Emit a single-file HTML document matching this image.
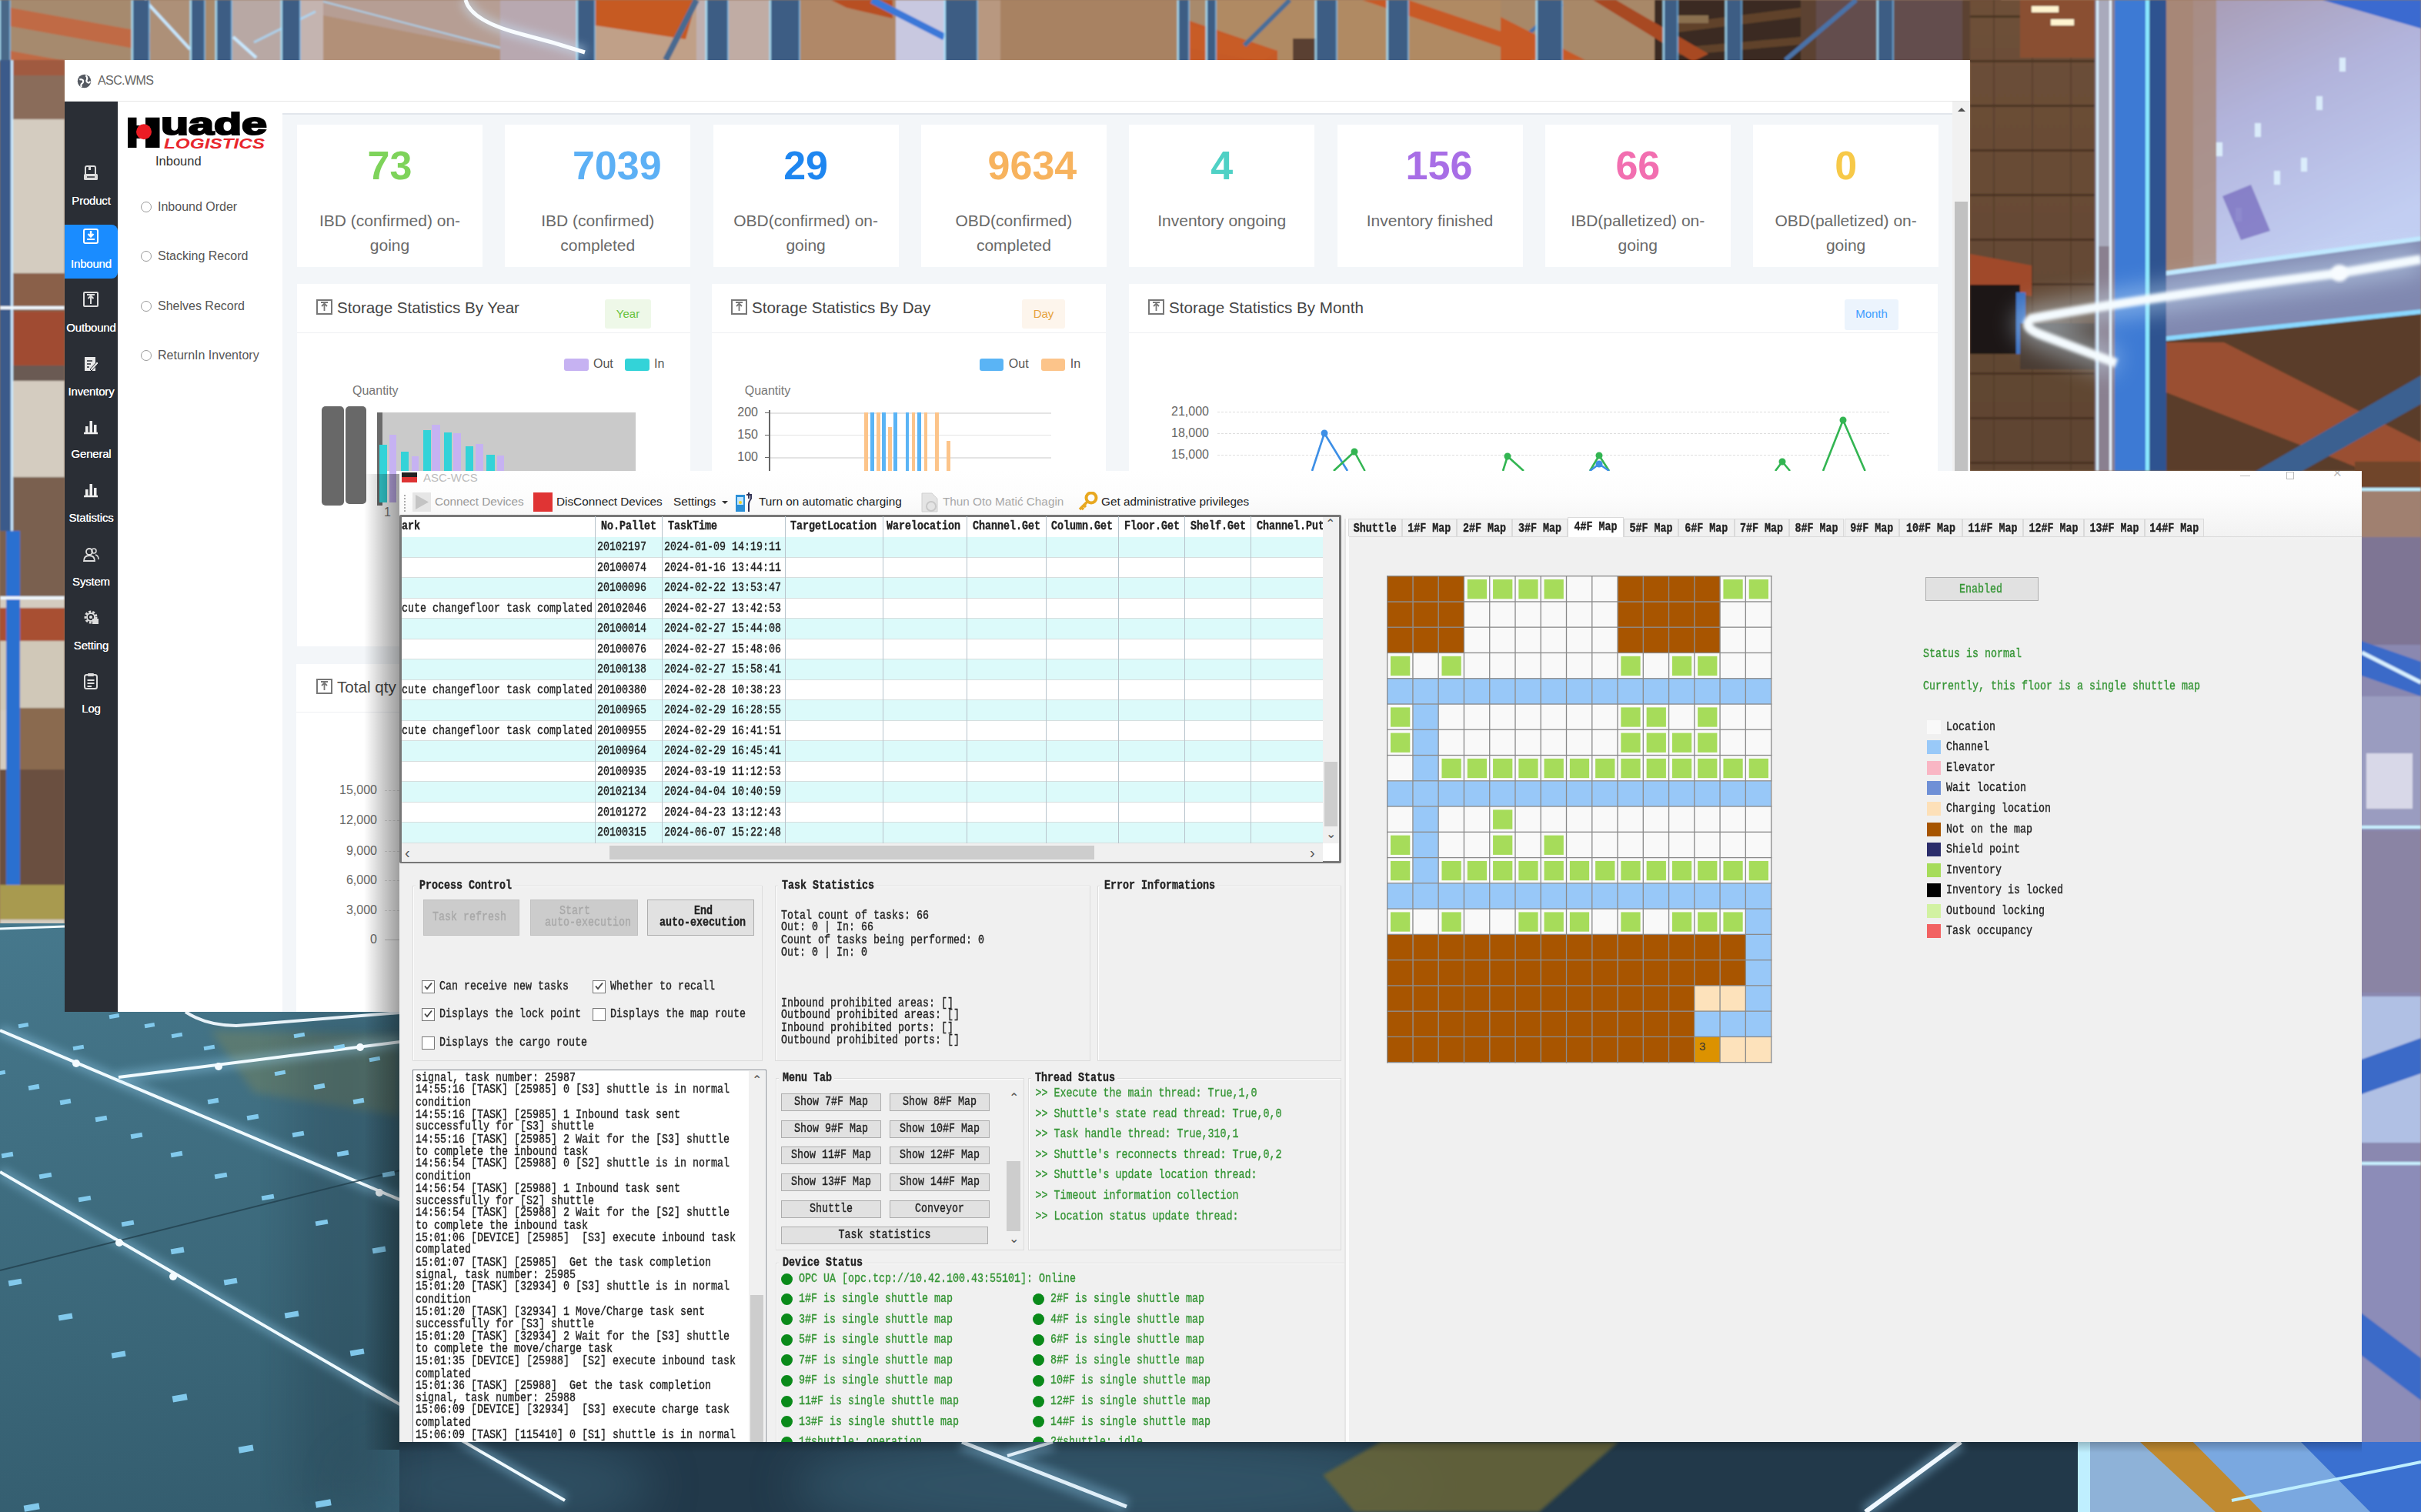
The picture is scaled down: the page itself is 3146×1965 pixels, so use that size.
<!DOCTYPE html><html><head><meta charset='utf-8'><style>
*{margin:0;padding:0;box-sizing:border-box;}
html,body{width:3146px;height:1965px;overflow:hidden;background:#6b7a8a;font-family:"Liberation Sans", sans-serif;position:relative;}
.a{position:absolute;}
.t{position:absolute;white-space:nowrap;}
.m{position:absolute;white-space:pre;font-family:"Liberation Mono", monospace;}
#bg{position:absolute;left:0;top:0;}
</style></head><body>
<svg id="bg" width="3146" height="1965" viewBox="0 0 3146 1965">
<defs>
<filter id="b1" x="-10%" y="-10%" width="120%" height="120%"><feGaussianBlur stdDeviation="1.2"/></filter>
<filter id="b2" x="-10%" y="-10%" width="120%" height="120%"><feGaussianBlur stdDeviation="2"/></filter>
<filter id="b6" x="-30%" y="-30%" width="160%" height="160%"><feGaussianBlur stdDeviation="6"/></filter>
<filter id="b15" x="-30%" y="-30%" width="160%" height="160%"><feGaussianBlur stdDeviation="15"/></filter>
<filter id="b30" x="-30%" y="-30%" width="160%" height="160%"><feGaussianBlur stdDeviation="30"/></filter>
<linearGradient id="floorL" x1="0" y1="0" x2="0.6" y2="1"><stop offset="0" stop-color="#46788c"/><stop offset="0.55" stop-color="#3a6678"/><stop offset="1" stop-color="#2e5466"/></linearGradient>
<linearGradient id="lav" x1="0" y1="0" x2="0.4" y2="1"><stop offset="0" stop-color="#a89cb4"/><stop offset="0.45" stop-color="#b2b4dc"/><stop offset="1" stop-color="#c2cef2"/></linearGradient>
<linearGradient id="rightS" x1="0" y1="0" x2="0" y2="1"><stop offset="0" stop-color="#7f92d2"/><stop offset="0.5" stop-color="#8a9ad8"/><stop offset="1" stop-color="#4c70c8"/></linearGradient>
<linearGradient id="boxes" x1="0" y1="0" x2="0" y2="1"><stop offset="0" stop-color="#6e5038"/><stop offset="1" stop-color="#5e4432"/></linearGradient>
</defs>
<rect width="3146" height="1965" fill="#9c7a5e"/>
<g filter="url(#b1)">
<rect x="0" y="0" width="2600" height="80" fill="#a88a6c"/>
<rect x="0" y="0" width="170" height="80" fill="#a68a6e"/>
<polygon points="13,10 247,52 247,76 13,34" fill="#c06a44"/>
<polygon points="13,66 90,80 13,80" fill="#c06a44"/>
<rect x="195" y="0" width="52" height="80" fill="#ad9078"/>
<rect x="300" y="0" width="65" height="80" fill="#b8a8a4"/>
<rect x="390" y="0" width="30" height="80" fill="#c4b4b0"/>
<rect x="420" y="0" width="230" height="80" fill="#b29078"/>
<polygon points="420,0 650,0 650,65 420,20" fill="#b8a4a0" opacity="0.7"/>
<line x1="420" y1="2" x2="650" y2="62" stroke="#a8dcff" stroke-width="2" opacity="0.8"/>
<line x1="188" y1="0" x2="247" y2="64" stroke="#c8e8ff" stroke-width="4"/>
<line x1="303" y1="48" x2="333" y2="75" stroke="#c8e8ff" stroke-width="4"/>
<line x1="330" y1="55" x2="410" y2="15" stroke="#a8dcff" stroke-width="3" opacity="0.8"/>
<rect x="0" y="0" width="13" height="80" fill="#4a6888"/>
<rect x="-1.5" y="0" width="2.5" height="80" fill="#a8e4ff" opacity="0.85"/>
<rect x="12" y="0" width="2" height="80" fill="#7cc8ff" opacity="0.6"/>
<rect x="172" y="0" width="22" height="80" fill="#3d5d84"/>
<rect x="170.5" y="0" width="2.5" height="80" fill="#a8e4ff" opacity="0.85"/>
<rect x="193" y="0" width="2" height="80" fill="#7cc8ff" opacity="0.6"/>
<rect x="248" y="0" width="18" height="80" fill="#3d5d84"/>
<rect x="246.5" y="0" width="2.5" height="80" fill="#a8e4ff" opacity="0.85"/>
<rect x="265" y="0" width="2" height="80" fill="#7cc8ff" opacity="0.6"/>
<rect x="281" y="0" width="20" height="80" fill="#3d5d84"/>
<rect x="279.5" y="0" width="2.5" height="80" fill="#a8e4ff" opacity="0.85"/>
<rect x="300" y="0" width="2" height="80" fill="#7cc8ff" opacity="0.6"/>
<rect x="366" y="0" width="24" height="80" fill="#3d5d84"/>
<rect x="364.5" y="0" width="2.5" height="80" fill="#a8e4ff" opacity="0.85"/>
<rect x="389" y="0" width="2" height="80" fill="#7cc8ff" opacity="0.6"/>
<rect x="650" y="0" width="100" height="80" fill="#b8a8b0"/>
<rect x="773" y="0" width="132" height="80" fill="#c0a088"/>
<polygon points="773,0 905,0 891,51 773,33" fill="#c65a24"/>
<polygon points="905,0 946,0 946,80 905,80" fill="#c0b0b0"/>
<line x1="905" y1="0" x2="865" y2="78" stroke="#4a6a90" stroke-width="8"/>
<rect x="946" y="0" width="54" height="80" fill="#c0aca4"/>
<rect x="1040" y="0" width="124" height="80" fill="#b08868"/>
<polygon points="1080,0 1160,0 1160,24 1100,10" fill="#b85020"/>
<rect x="1164" y="0" width="64" height="80" fill="#c8c8e0"/>
<line x1="1133" y1="0" x2="1227" y2="48" stroke="#3a78d8" stroke-width="9"/>
<rect x="1270" y="0" width="30" height="80" fill="#b89880"/>
<rect x="750" y="0" width="23" height="80" fill="#3d5d84"/>
<rect x="748.5" y="0" width="2.5" height="80" fill="#a8e4ff" opacity="0.85"/>
<rect x="772" y="0" width="2" height="80" fill="#7cc8ff" opacity="0.6"/>
<rect x="918" y="0" width="28" height="80" fill="#3d5d84"/>
<rect x="916.5" y="0" width="2.5" height="80" fill="#a8e4ff" opacity="0.85"/>
<rect x="945" y="0" width="2" height="80" fill="#7cc8ff" opacity="0.6"/>
<rect x="1001" y="0" width="38" height="80" fill="#3d5d84"/>
<rect x="999.5" y="0" width="2.5" height="80" fill="#a8e4ff" opacity="0.85"/>
<rect x="1038" y="0" width="2" height="80" fill="#7cc8ff" opacity="0.6"/>
<rect x="1228" y="0" width="42" height="80" fill="#3d5d84"/>
<rect x="1226.5" y="0" width="2.5" height="80" fill="#a8e4ff" opacity="0.85"/>
<rect x="1269" y="0" width="2" height="80" fill="#7cc8ff" opacity="0.6"/>
<rect x="1300" y="0" width="230" height="80" fill="#a88262"/>
<rect x="1580" y="0" width="370" height="80" fill="#b08a64"/>
<polygon points="1531,25 1540,25 1660,66 1660,80 1531,80" fill="#c65a26"/>
<polygon points="1531,28 1660,66 1640,80 1531,60" fill="#c85c28"/>
<line x1="1676" y1="0" x2="1617" y2="59" stroke="#4a6e98" stroke-width="6"/>
<polygon points="1770,0 1830,0 2060,78 2000,78" fill="#c85a26"/>
<rect x="1680" y="50" width="30" height="30" fill="#5a4030"/>
<rect x="1531" y="0" width="14" height="80" fill="#3d5d84"/>
<rect x="1529.5" y="0" width="2.5" height="80" fill="#a8e4ff" opacity="0.85"/>
<rect x="1544" y="0" width="2" height="80" fill="#7cc8ff" opacity="0.6"/>
<rect x="1568" y="0" width="12" height="80" fill="#3d5d84"/>
<rect x="1566.5" y="0" width="2.5" height="80" fill="#a8e4ff" opacity="0.85"/>
<rect x="1579" y="0" width="2" height="80" fill="#7cc8ff" opacity="0.6"/>
<rect x="1710" y="0" width="27" height="80" fill="#3d5d84"/>
<rect x="1708.5" y="0" width="2.5" height="80" fill="#a8e4ff" opacity="0.85"/>
<rect x="1736" y="0" width="2" height="80" fill="#7cc8ff" opacity="0.6"/>
<rect x="1803" y="0" width="27" height="80" fill="#3d5d84"/>
<rect x="1801.5" y="0" width="2.5" height="80" fill="#a8e4ff" opacity="0.85"/>
<rect x="1829" y="0" width="2" height="80" fill="#7cc8ff" opacity="0.6"/>
<rect x="1950" y="0" width="200" height="80" fill="#a88868"/>
<polygon points="1950,27 1990,55 1990,80 1950,80" fill="#c05830"/>
<rect x="2150" y="0" width="195" height="80" fill="#3a2a20"/>
<polygon points="2180,30 2340,10 2340,22 2180,42" fill="#6a4a30" opacity="0.8"/>
<polygon points="2180,62 2340,48 2340,58 2180,72" fill="#6a4a30" opacity="0.8"/>
<polygon points="2070,0 2100,0 2220,70 2200,80" fill="#a84a24"/>
<rect x="2180" y="20" width="40" height="10" fill="#8a7050"/>
<rect x="2340" y="0" width="260" height="80" fill="#5c4232"/>
<rect x="2360" y="0" width="190" height="80" fill="#6a5a68" opacity="0.5"/>
<line x1="2412" y1="0" x2="2320" y2="78" stroke="#4a72a8" stroke-width="6"/>
<line x1="2030" y1="5" x2="1985" y2="45" stroke="#4a72a8" stroke-width="5"/>
<polygon points="1950,22 2060,78 1950,78" fill="#c85a26"/>
<rect x="1997" y="0" width="33" height="80" fill="#3d5d84"/>
<rect x="1995.5" y="0" width="2.5" height="80" fill="#a8e4ff" opacity="0.85"/>
<rect x="2029" y="0" width="2" height="80" fill="#7cc8ff" opacity="0.6"/>
<rect x="2162" y="0" width="18" height="80" fill="#3d5d84"/>
<rect x="2160.5" y="0" width="2.5" height="80" fill="#a8e4ff" opacity="0.85"/>
<rect x="2179" y="0" width="2" height="80" fill="#7cc8ff" opacity="0.6"/>
<rect x="2243" y="0" width="20" height="80" fill="#3d5d84"/>
<rect x="2241.5" y="0" width="2.5" height="80" fill="#a8e4ff" opacity="0.85"/>
<rect x="2262" y="0" width="2" height="80" fill="#7cc8ff" opacity="0.6"/>
<rect x="2440" y="0" width="20" height="80" fill="#3d5d84"/>
<rect x="2438.5" y="0" width="2.5" height="80" fill="#a8e4ff" opacity="0.85"/>
<rect x="2459" y="0" width="2" height="80" fill="#7cc8ff" opacity="0.6"/>
</g>
<path d="M605 0 Q612 28 680 45 Q720 55 760 68" stroke="#c8e8ff" stroke-width="14" fill="none" opacity="0.45" filter="url(#b6)"/>
<path d="M605 0 Q612 28 680 45 Q720 55 760 68" stroke="#f8fcff" stroke-width="5" fill="none"/>
<g filter="url(#b1)">
<rect x="0" y="78" width="84" height="1125" fill="#d4ccc0"/>
<rect x="0" y="78" width="84" height="20" fill="#a05a40"/>
<rect x="0" y="98" width="84" height="57" fill="#8a6c5a"/>
<rect x="0" y="355" width="84" height="50" fill="#8a6048"/>
<rect x="0" y="405" width="84" height="70" fill="#a04c32"/>
<rect x="0" y="475" width="84" height="20" fill="#6a5a52"/>
<rect x="0" y="620" width="84" height="155" fill="#7a6050"/>
<rect x="0" y="790" width="84" height="43" fill="#a85030"/>
<rect x="0" y="833" width="84" height="90" fill="#d0c8b8"/>
<rect x="25" y="920" width="59" height="80" fill="#8a6a50"/>
<rect x="0" y="1000" width="84" height="150" fill="#6a5040"/>
<rect x="0" y="1150" width="84" height="45" fill="#a89a50"/>
<rect x="0" y="78" width="17" height="612" fill="#3a5a8a"/>
<rect x="14" y="78" width="3" height="612" fill="#c8e8ff"/>
<rect x="8" y="690" width="18" height="460" fill="#2a70d0"/>
<rect x="0" y="398" width="84" height="4" fill="#f0f8ff"/>
<rect x="0" y="775" width="84" height="4" fill="#f0f8ff"/>
</g>
<g filter="url(#b1)">
<rect x="2560" y="0" width="170" height="612" fill="url(#boxes)"/>
<rect x="2560" y="20" width="170" height="3" fill="#3e2a1c" opacity="0.7"/>
<rect x="2560" y="78" width="170" height="3" fill="#3e2a1c" opacity="0.7"/>
<rect x="2560" y="136" width="170" height="3" fill="#3e2a1c" opacity="0.7"/>
<rect x="2560" y="194" width="170" height="3" fill="#3e2a1c" opacity="0.7"/>
<rect x="2560" y="252" width="170" height="3" fill="#3e2a1c" opacity="0.7"/>
<rect x="2560" y="310" width="170" height="3" fill="#3e2a1c" opacity="0.7"/>
<rect x="2560" y="368" width="170" height="3" fill="#3e2a1c" opacity="0.7"/>
<rect x="2560" y="426" width="170" height="3" fill="#3e2a1c" opacity="0.7"/>
<rect x="2560" y="484" width="170" height="3" fill="#3e2a1c" opacity="0.7"/>
<rect x="2560" y="542" width="170" height="3" fill="#3e2a1c" opacity="0.7"/>
<rect x="2560" y="600" width="170" height="3" fill="#3e2a1c" opacity="0.7"/>
<rect x="2590" y="0" width="2" height="612" fill="#4a3424" opacity="0.5"/>
<rect x="2640" y="0" width="2" height="612" fill="#4a3424" opacity="0.5"/>
<rect x="2690" y="0" width="2" height="612" fill="#4a3424" opacity="0.5"/>
<rect x="2625" y="0" width="105" height="75" fill="#8a5030"/>
<rect x="2640" y="8" width="35" height="8" fill="#fff4d0"/>
<rect x="2665" y="25" width="30" height="8" fill="#fff4d0"/>
<polygon points="2560,330 2640,345 2640,385 2560,370" fill="#a0482a"/>
<rect x="2560" y="370" width="65" height="90" fill="#1e1612"/>
<rect x="2620" y="380" width="12" height="80" fill="#3a70c0"/>
<rect x="2625" y="420" width="105" height="60" fill="#4a3a30"/>
<rect x="2722" y="0" width="28" height="612" fill="#8a8090"/>
<rect x="2724" y="0" width="3" height="612" fill="#d8f0ff"/>
<rect x="2741" y="0" width="3" height="612" fill="#e8f4ff"/>
<rect x="2727" y="0" width="14" height="320" fill="#c8d4e8" opacity="0.5"/>
<rect x="2748" y="0" width="42" height="612" fill="#3c7ad4"/>
<rect x="2788" y="0" width="5" height="612" fill="#8ae8ff"/>
<rect x="2793" y="0" width="22" height="612" fill="#2e5290"/>
<rect x="2815" y="0" width="45" height="350" fill="#a48472"/>
<polygon points="2850,0 3146,0 3146,310 2850,350" fill="url(#lav)"/>
<polygon points="2815,0 2880,0 2880,350 2815,355" fill="#a88878" opacity="0.8"/>
<polygon points="3018,0 3146,0 3146,37" fill="#3a6ad0"/>
<rect x="2880" y="185" width="8" height="18" fill="#e0f4ff" opacity="0.85"/>
<rect x="2930" y="160" width="8" height="18" fill="#e0f4ff" opacity="0.85"/>
<rect x="2955" y="222" width="8" height="18" fill="#e0f4ff" opacity="0.85"/>
<rect x="2990" y="205" width="8" height="18" fill="#e0f4ff" opacity="0.85"/>
<rect x="3010" y="125" width="8" height="18" fill="#e0f4ff" opacity="0.85"/>
<rect x="2905" y="270" width="8" height="18" fill="#e0f4ff" opacity="0.85"/>
<rect x="3040" y="75" width="8" height="18" fill="#e0f4ff" opacity="0.85"/>
<polygon points="2888,255 2925,240 2950,300 2912,312" fill="#7a70c0" opacity="0.8"/>
<polygon points="2815,355 3146,310 3146,405 2815,440" fill="#8088b0"/>
<polygon points="2815,440 3146,405 3146,612 2815,612" fill="#5a3e2c"/>
<polygon points="2815,445 2890,445 3146,575 3146,640 2815,510" fill="#9a5030"/>
<polygon points="2930,613 2990,613 3146,525 3146,488" fill="#3a6090"/>
<polygon points="2815,352 3146,307 3146,313 2815,358" fill="#bfe8ff"/>
<polygon points="2815,437 3146,402 3146,408 2815,443" fill="#8ad8ff"/>
</g>
<path d="M3146 337 L3040 355 Q2800 385 2640 414 Q2625 425 2655 436 L2750 472" stroke="#d0ecff" stroke-width="34" fill="none" opacity="0.45" filter="url(#b15)"/>
<path d="M3146 337 L3040 355 Q2800 385 2640 414 Q2625 425 2655 436 L2750 472" stroke="#f4fbff" stroke-width="12" fill="none" filter="url(#b2)"/>
<circle cx="3040" cy="355" r="11" fill="#f8fcff" filter="url(#b2)"/>
<g filter="url(#b1)">
<rect x="3060" y="600" width="86" height="1365" fill="#8a88b0"/>
<rect x="3060" y="600" width="86" height="36" fill="#4a3224"/>
<rect x="3060" y="634" width="86" height="4" fill="#bfefff"/>
<rect x="3060" y="638" width="86" height="60" fill="#a08070"/>
<rect x="3060" y="698" width="86" height="140" fill="#7e7494"/>
<rect x="3060" y="600" width="86" height="34" fill="#8a5030" opacity="0.6"/>
<polygon points="3060,830 3146,860 3146,905 3060,875" fill="#3a6ac8"/>
<line x1="3069" y1="848" x2="3146" y2="887" stroke="#d8f0ff" stroke-width="5"/>
<rect x="3060" y="905" width="86" height="170" fill="#9a9cc0"/>
<rect x="3075" y="979" width="60" height="72" fill="#d8d8e8"/>
<rect x="3060" y="1073" width="86" height="4" fill="#c8f0ff"/>
<rect x="3060" y="1080" width="86" height="210" fill="#8a84a4"/>
<rect x="3060" y="1295" width="86" height="190" fill="#b0c0e4"/>
<polygon points="3060,1380 3146,1349 3146,1395 3060,1425" fill="#3a6ac8"/>
<rect x="3060" y="1510" width="86" height="4" fill="#c8f0ff"/>
<rect x="3060" y="1514" width="86" height="451" fill="#8c8cb8"/>
<polygon points="3060,1700 3146,1765 3146,1820 3060,1755" fill="#3a6ac8"/>
<rect x="3060" y="1880" width="86" height="85" fill="#4a78d0"/>
</g>
<polygon points="0,1200 84,1200 84,1315 519,1315 519,1874 3146,1874 3146,1965 0,1965" fill="url(#floorL)"/>
<rect x="519" y="1874" width="2627" height="91" fill="#22394a"/>
<ellipse cx="1450" cy="1930" rx="420" ry="70" fill="#3a6478" opacity="0.6" filter="url(#b30)"/>
<ellipse cx="650" cy="1930" rx="200" ry="60" fill="#3a6478" opacity="0.5" filter="url(#b30)"/>
<polygon points="1794,1874 2103,1874 2000,1965 1760,1965 1719,1917" fill="#6a6638" opacity="0.85" filter="url(#b2)"/>
<polygon points="2700,1874 3146,1874 3146,1965 2700,1965" fill="#8eb2d8"/>
<rect x="2700" y="1874" width="16" height="91" fill="#bfefff"/>
<polygon points="2781,1874 2850,1874 2940,1965 2879,1965" fill="#c08a30"/>
<polygon points="2850,1874 2990,1874 3080,1965 2940,1965" fill="#7aa8e0"/>
<polygon points="2990,1874 3146,1874 3146,1965 3080,1965" fill="#3a70d0"/>
<line x1="2900" y1="1950" x2="3146" y2="1900" stroke="#bfefff" stroke-width="4"/>
<polygon points="273,1339 519,1345 519,1450 330,1420" fill="#8a8a50" opacity="0.35" filter="url(#b6)"/>
<rect x="380" y="1315" width="139" height="650" fill="#1a2e3a" opacity="0.25" filter="url(#b30)"/>
<line x1="0" y1="1339" x2="734" y2="1650" stroke="#9fdcff" stroke-width="14" opacity="0.35" filter="url(#b6)"/>
<line x1="0" y1="1339" x2="734" y2="1650" stroke="#f0faff" stroke-width="4"/>
<line x1="0" y1="1523" x2="734" y2="1950" stroke="#9fdcff" stroke-width="14" opacity="0.35" filter="url(#b6)"/>
<line x1="0" y1="1523" x2="734" y2="1950" stroke="#f0faff" stroke-width="4"/>
<line x1="154" y1="1400" x2="520" y2="1354" stroke="#9fdcff" stroke-width="14" opacity="0.35" filter="url(#b6)"/>
<line x1="154" y1="1400" x2="520" y2="1354" stroke="#f0faff" stroke-width="4"/>
<line x1="1250" y1="1874" x2="1464" y2="1958" stroke="#9fdcff" stroke-width="22" opacity="0.3" filter="url(#b6)"/>
<line x1="1250" y1="1874" x2="1464" y2="1958" stroke="#dfeef8" stroke-width="5"/>
<line x1="1309" y1="1892" x2="1368" y2="1874" stroke="#9fdcff" stroke-width="22" opacity="0.3" filter="url(#b6)"/>
<line x1="1309" y1="1892" x2="1368" y2="1874" stroke="#dfeef8" stroke-width="4"/>
<path d="M241 1315 Q268 1333 307 1333 L520 1316" stroke="#e8f2f8" stroke-width="4" fill="none"/>
<line x1="0" y1="1651" x2="520" y2="1521" stroke="#22404e" stroke-width="2" opacity="0.8"/>
<circle cx="99" cy="1382" r="5" fill="#f4fbff"/>
<circle cx="155" cy="1615" r="5" fill="#f4fbff"/>
<circle cx="225" cy="1659" r="5" fill="#f4fbff"/>
<circle cx="284" cy="1386" r="5" fill="#f4fbff"/>
<circle cx="468" cy="1361" r="5" fill="#f4fbff"/>
<circle cx="493" cy="1550" r="5" fill="#f4fbff"/>
<line x1="0" y1="1207" x2="84" y2="1204" stroke="#f0faff" stroke-width="3"/>
<line x1="2548" y1="1874" x2="2424" y2="1965" stroke="#9fdcff" stroke-width="16" opacity="0.4" filter="url(#b6)"/>
<line x1="2548" y1="1874" x2="2424" y2="1965" stroke="#f0f8ff" stroke-width="6"/>
<rect x="24" y="1330" width="13" height="5" fill="#8ad4f8" opacity="0.9" transform="rotate(-10 31 1333)"/>
<rect x="95" y="1359" width="14" height="5" fill="#8ad4f8" opacity="0.9" transform="rotate(-10 102 1362)"/>
<rect x="265" y="1359" width="14" height="5" fill="#8ad4f8" opacity="0.9" transform="rotate(-10 272 1362)"/>
<rect x="223" y="1343" width="14" height="5" fill="#8ad4f8" opacity="0.9" transform="rotate(-10 230 1346)"/>
<rect x="142" y="1318" width="13" height="5" fill="#8ad4f8" opacity="0.9" transform="rotate(-10 149 1321)"/>
<rect x="188" y="1330" width="13" height="5" fill="#8ad4f8" opacity="0.9" transform="rotate(-10 195 1333)"/>
<rect x="357" y="1392" width="14" height="5" fill="#8ad4f8" opacity="0.9" transform="rotate(-10 364 1395)"/>
<rect x="408" y="1409" width="14" height="6" fill="#8ad4f8" opacity="0.9" transform="rotate(-10 415 1412)"/>
<rect x="459" y="1428" width="14" height="6" fill="#8ad4f8" opacity="0.9" transform="rotate(-10 466 1431)"/>
<rect x="480" y="1374" width="14" height="5" fill="#8ad4f8" opacity="0.9" transform="rotate(-10 487 1377)"/>
<rect x="434" y="1358" width="14" height="5" fill="#8ad4f8" opacity="0.9" transform="rotate(-10 441 1361)"/>
<rect x="382" y="1343" width="14" height="5" fill="#8ad4f8" opacity="0.9" transform="rotate(-10 389 1346)"/>
<rect x="-7" y="1392" width="14" height="5" fill="#8ad4f8" opacity="0.9" transform="rotate(-10 0 1395)"/>
<rect x="37" y="1410" width="14" height="6" fill="#8ad4f8" opacity="0.9" transform="rotate(-10 44 1413)"/>
<rect x="78" y="1429" width="14" height="6" fill="#8ad4f8" opacity="0.9" transform="rotate(-10 85 1432)"/>
<rect x="124" y="1451" width="15" height="6" fill="#8ad4f8" opacity="0.9" transform="rotate(-10 131 1454)"/>
<rect x="170" y="1473" width="15" height="6" fill="#8ad4f8" opacity="0.9" transform="rotate(-10 177 1476)"/>
<rect x="222" y="1497" width="15" height="6" fill="#8ad4f8" opacity="0.9" transform="rotate(-10 230 1500)"/>
<rect x="279" y="1525" width="16" height="6" fill="#8ad4f8" opacity="0.9" transform="rotate(-10 287 1528)"/>
<rect x="340" y="1553" width="16" height="6" fill="#8ad4f8" opacity="0.9" transform="rotate(-10 348 1556)"/>
<rect x="410" y="1586" width="16" height="6" fill="#8ad4f8" opacity="0.9" transform="rotate(-10 418 1589)"/>
<rect x="484" y="1621" width="17" height="7" fill="#8ad4f8" opacity="0.9" transform="rotate(-10 492 1624)"/>
<rect x="270" y="1428" width="14" height="6" fill="#8ad4f8" opacity="0.9" transform="rotate(-10 277 1431)"/>
<rect x="321" y="1449" width="15" height="6" fill="#8ad4f8" opacity="0.9" transform="rotate(-10 328 1452)"/>
<rect x="380" y="1471" width="15" height="6" fill="#8ad4f8" opacity="0.9" transform="rotate(-10 387 1474)"/>
<rect x="438" y="1496" width="15" height="6" fill="#8ad4f8" opacity="0.9" transform="rotate(-10 446 1499)"/>
<rect x="497" y="1523" width="16" height="6" fill="#8ad4f8" opacity="0.9" transform="rotate(-10 505 1526)"/>
<rect x="2" y="1498" width="15" height="6" fill="#8ad4f8" opacity="0.9" transform="rotate(-10 10 1501)"/>
<rect x="51" y="1525" width="16" height="6" fill="#8ad4f8" opacity="0.9" transform="rotate(-10 59 1528)"/>
<rect x="102" y="1555" width="16" height="6" fill="#8ad4f8" opacity="0.9" transform="rotate(-10 110 1558)"/>
<rect x="158" y="1587" width="16" height="6" fill="#8ad4f8" opacity="0.9" transform="rotate(-10 166 1590)"/>
<rect x="222" y="1622" width="17" height="7" fill="#8ad4f8" opacity="0.9" transform="rotate(-10 230 1625)"/>
<rect x="291" y="1662" width="17" height="7" fill="#8ad4f8" opacity="0.9" transform="rotate(-10 300 1665)"/>
<rect x="370" y="1705" width="18" height="7" fill="#8ad4f8" opacity="0.9" transform="rotate(-10 379 1708)"/>
<rect x="455" y="1754" width="18" height="7" fill="#8ad4f8" opacity="0.9" transform="rotate(-10 464 1757)"/>
<rect x="11" y="1663" width="17" height="7" fill="#8ad4f8" opacity="0.9" transform="rotate(-10 20 1666)"/>
<rect x="76" y="1708" width="18" height="7" fill="#8ad4f8" opacity="0.9" transform="rotate(-10 85 1711)"/>
<rect x="145" y="1757" width="18" height="7" fill="#8ad4f8" opacity="0.9" transform="rotate(-10 154 1760)"/>
<rect x="224" y="1813" width="19" height="8" fill="#8ad4f8" opacity="0.9" transform="rotate(-10 233 1816)"/>
<rect x="310" y="1879" width="19" height="8" fill="#8ad4f8" opacity="0.9" transform="rotate(-10 320 1882)"/>
<rect x="410" y="1950" width="20" height="8" fill="#8ad4f8" opacity="0.9" transform="rotate(-10 420 1953)"/>
<rect x="31" y="1955" width="20" height="8" fill="#8ad4f8" opacity="0.9" transform="rotate(-10 41 1958)"/>
</svg>
<div class="a" style="left:84px;top:78px;width:2476px;height:1237px;overflow:hidden"><div class="a" style="left:-84px;top:-78px;width:3146px;height:1965px">
<div class="a" style="left:84.0px;top:78.0px;width:2476.0px;height:1237.0px;background:#fff"></div>
<div class="a" style="left:84.0px;top:131.0px;width:2476.0px;height:1.0px;background:#e6e6e6"></div>
<svg class="a" style="left:100px;top:96px" width="19" height="19" viewBox="0 0 20 20"><circle cx="10" cy="10" r="9.2" fill="#555a62"/><path d="M3.5 8 Q6 6.5 8.5 9 Q9 12 6.5 13.5 Q5 15 6 18 M12 2 Q15 5 13.5 8 Q12 10.5 15 12 Q17 13 18 10" stroke="#fff" stroke-width="2.2" fill="none"/></svg>
<div class="t" style="left:127.0px;top:95.0px;font-size:16px;color:#666;line-height:20px;letter-spacing:-0.6px">ASC.WMS</div>
<div class="a" style="left:84.0px;top:132.0px;width:69.0px;height:1183.0px;background:#2a2e35"></div>
<div class="a" style="left:84.0px;top:292.0px;width:69.0px;height:70.0px;background:#1a8cff;border-radius:0 8px 8px 0"></div>
<svg class="a" style="left:107px;top:214px" width="22" height="22" viewBox="0 0 22 22"><rect x="4" y="2" width="13" height="16" rx="2" fill="none" stroke="#ddd" stroke-width="2"/><rect x="2" y="12" width="18" height="8" rx="1.5" fill="#ddd"/><path d="M6 16 H16" stroke="#2a2e35" stroke-width="1.5"/><rect x="8" y="1" width="3" height="6" fill="#ddd"/></svg>
<div class="t" style="left:84.0px;top:251.5px;width:69px;text-align:center;color:#fff;font-size:15px;line-height:18px;letter-spacing:-0.2px;text-shadow:0 0 0.6px #fff">Product</div>
<svg class="a" style="left:107px;top:296px" width="22" height="22" viewBox="0 0 22 22"><rect x="2" y="2" width="18" height="18" rx="2" fill="none" stroke="#fff" stroke-width="2"/><path d="M11 4 V11 M7.5 8 L11 11.5 L14.5 8" stroke="#fff" stroke-width="2.4" fill="none"/><path d="M6 15 H16" stroke="#fff" stroke-width="2"/></svg>
<div class="t" style="left:84.0px;top:334.0px;width:69px;text-align:center;color:#fff;font-size:15px;line-height:18px;letter-spacing:-0.2px;text-shadow:0 0 0.6px #fff">Inbound</div>
<svg class="a" style="left:107px;top:378px" width="22" height="22" viewBox="0 0 22 22"><rect x="2" y="2" width="18" height="18" rx="1" fill="none" stroke="#ddd" stroke-width="2"/><path d="M11 17 V7 M7.5 10 L11 6.5 L14.5 10 M6 5 H16" stroke="#ddd" stroke-width="2" fill="none"/></svg>
<div class="t" style="left:84.0px;top:417.0px;width:69px;text-align:center;color:#fff;font-size:15px;line-height:18px;letter-spacing:-0.2px;text-shadow:0 0 0.6px #fff">Outbound</div>
<svg class="a" style="left:107px;top:462px" width="22" height="22" viewBox="0 0 22 22"><path d="M3 2 H17 V20 H3 Z" fill="#e8e8e8"/><path d="M6 7 H13 M6 11 H11 M6 15 H9" stroke="#2a2e35" stroke-width="1.5"/><path d="M10 18 L19 8 L21 10 L12 20 Z" fill="#e8e8e8" stroke="#2a2e35" stroke-width="1"/></svg>
<div class="t" style="left:84.0px;top:500.0px;width:69px;text-align:center;color:#fff;font-size:15px;line-height:18px;letter-spacing:-0.2px;text-shadow:0 0 0.6px #fff">Inventory</div>
<svg class="a" style="left:107px;top:544px" width="22" height="22" viewBox="0 0 22 22"><path d="M2 19 H20" stroke="#eee" stroke-width="2.5"/><rect x="4" y="10" width="3.5" height="8" fill="#eee"/><rect x="9.5" y="3" width="3.5" height="15" fill="#eee"/><rect x="15" y="8" width="3.5" height="10" fill="#eee"/></svg>
<div class="t" style="left:84.0px;top:581.0px;width:69px;text-align:center;color:#fff;font-size:15px;line-height:18px;letter-spacing:-0.2px;text-shadow:0 0 0.6px #fff">General</div>
<svg class="a" style="left:107px;top:626px" width="22" height="22" viewBox="0 0 22 22"><path d="M2 19 H20" stroke="#eee" stroke-width="2.5"/><rect x="4" y="10" width="3.5" height="8" fill="#eee"/><rect x="9.5" y="3" width="3.5" height="15" fill="#eee"/><rect x="15" y="8" width="3.5" height="10" fill="#eee"/></svg>
<div class="t" style="left:84.0px;top:664.0px;width:69px;text-align:center;color:#fff;font-size:15px;line-height:18px;letter-spacing:-0.2px;text-shadow:0 0 0.6px #fff">Statistics</div>
<svg class="a" style="left:107px;top:710px" width="22" height="22" viewBox="0 0 22 22"><circle cx="9" cy="7" r="4" fill="none" stroke="#ddd" stroke-width="1.8"/><path d="M2 19 Q2 12 9 12 Q16 12 16 19 Z" fill="none" stroke="#ddd" stroke-width="1.8"/><circle cx="15" cy="6" r="3" fill="none" stroke="#ddd" stroke-width="1.5"/><path d="M17 11 Q21 12 21 17" fill="none" stroke="#ddd" stroke-width="1.5"/></svg>
<div class="t" style="left:84.0px;top:747.0px;width:69px;text-align:center;color:#fff;font-size:15px;line-height:18px;letter-spacing:-0.2px;text-shadow:0 0 0.6px #fff">System</div>
<svg class="a" style="left:107px;top:791px" width="22" height="22" viewBox="0 0 22 22"><circle cx="11" cy="11" r="7" fill="none" stroke="#ddd" stroke-width="3" stroke-dasharray="3 2"/><circle cx="11" cy="11" r="5" fill="none" stroke="#ddd" stroke-width="1.8"/><circle cx="11" cy="11" r="2" fill="#ddd"/><rect x="13" y="13" width="8" height="7" fill="#ddd"/></svg>
<div class="t" style="left:84.0px;top:830.0px;width:69px;text-align:center;color:#fff;font-size:15px;line-height:18px;letter-spacing:-0.2px;text-shadow:0 0 0.6px #fff">Setting</div>
<svg class="a" style="left:107px;top:874px" width="22" height="22" viewBox="0 0 22 22"><rect x="3" y="3" width="16" height="18" rx="2.5" fill="none" stroke="#ddd" stroke-width="2"/><rect x="7" y="1" width="8" height="4" rx="1" fill="#ddd"/><path d="M6.5 10 H15.5 M6.5 14 H15.5 M6.5 18 H12" stroke="#ddd" stroke-width="1.8"/></svg>
<div class="t" style="left:84.0px;top:912.0px;width:69px;text-align:center;color:#fff;font-size:15px;line-height:18px;letter-spacing:-0.2px;text-shadow:0 0 0.6px #fff">Log</div>
<svg class="a" style="left:160px;top:145px" width="195" height="52" viewBox="160 145 195 52"><rect x="166" y="152.7" width="11.5" height="39.3" fill="#000"/><rect x="189" y="152.7" width="18.5" height="39.3" fill="#000"/><rect x="176" y="163" width="14" height="17" fill="#000"/><circle cx="187" cy="171.3" r="10" fill="#ec1c24"/><text x="209" y="174.7" font-family="Liberation Sans" font-weight="bold" font-size="41" textLength="138" lengthAdjust="spacingAndGlyphs" fill="#000" stroke="#000" stroke-width="2.2">uade</text><text x="213" y="192.5" font-family="Liberation Sans" font-weight="bold" font-style="italic" font-size="18.5" textLength="131" lengthAdjust="spacingAndGlyphs" fill="#e8262c">LOGISTICS</text></svg>
<div class="t" style="left:202.0px;top:200.0px;font-size:16.5px;color:#333;line-height:18px">Inbound</div>
<div class="a" style="left:183.0px;top:261.7px;width:14.0px;height:14.0px;border:1.5px solid #999;border-radius:50%"></div>
<div class="t" style="left:205.0px;top:258.7px;font-size:16px;color:#555;line-height:20px">Inbound Order</div>
<div class="a" style="left:183.0px;top:326.2px;width:14.0px;height:14.0px;border:1.5px solid #999;border-radius:50%"></div>
<div class="t" style="left:205.0px;top:323.2px;font-size:16px;color:#555;line-height:20px">Stacking Record</div>
<div class="a" style="left:183.0px;top:390.7px;width:14.0px;height:14.0px;border:1.5px solid #999;border-radius:50%"></div>
<div class="t" style="left:205.0px;top:387.7px;font-size:16px;color:#555;line-height:20px">Shelves Record</div>
<div class="a" style="left:183.0px;top:455.2px;width:14.0px;height:14.0px;border:1.5px solid #999;border-radius:50%"></div>
<div class="t" style="left:205.0px;top:452.2px;font-size:16px;color:#555;line-height:20px">ReturnIn Inventory</div>
<div class="a" style="left:367.0px;top:147.0px;width:2170.0px;height:1168.0px;background:#f3f6f9;border-top:2px solid #e2e6ec"></div>
<div class="a" style="left:2537.0px;top:132.0px;width:23.0px;height:1183.0px;background:#f1f1f1"></div>
<div class="a" style="left:2540.0px;top:262.0px;width:17.0px;height:1100.0px;background:#c1c1c1"></div>
<div class="a" style="left:2544.0px;top:140.0px;width:0.0px;height:0.0px;border-left:5px solid transparent;border-right:5px solid transparent;border-bottom:5px solid #505050"></div>
<div class="a" style="left:386.0px;top:162.0px;width:241.0px;height:185.0px;background:#fff"></div>
<div class="t" style="left:386.0px;top:185.0px;width:241px;text-align:center;font-weight:bold;font-size:52px;line-height:60px;color:#7ed35a">73</div>
<div class="t" style="left:386.0px;top:271.0px;width:241px;text-align:center;font-size:21px;line-height:32px;color:#6a6a6a;white-space:normal">IBD (confirmed) on-<br>going</div>
<div class="a" style="left:656.3px;top:162.0px;width:241.0px;height:185.0px;background:#fff"></div>
<div class="t" style="left:681.3px;top:185.0px;width:241px;text-align:center;font-weight:bold;font-size:52px;line-height:60px;color:#5cb0f5">7039</div>
<div class="t" style="left:656.3px;top:271.0px;width:241px;text-align:center;font-size:21px;line-height:32px;color:#6a6a6a;white-space:normal">IBD (confirmed)<br>completed</div>
<div class="a" style="left:926.6px;top:162.0px;width:241.0px;height:185.0px;background:#fff"></div>
<div class="t" style="left:926.6px;top:185.0px;width:241px;text-align:center;font-weight:bold;font-size:52px;line-height:60px;color:#1e86f0">29</div>
<div class="t" style="left:926.6px;top:271.0px;width:241px;text-align:center;font-size:21px;line-height:32px;color:#6a6a6a;white-space:normal">OBD(confirmed) on-<br>going</div>
<div class="a" style="left:1196.9px;top:162.0px;width:241.0px;height:185.0px;background:#fff"></div>
<div class="t" style="left:1220.9px;top:185.0px;width:241px;text-align:center;font-weight:bold;font-size:52px;line-height:60px;color:#f7b35e">9634</div>
<div class="t" style="left:1196.9px;top:271.0px;width:241px;text-align:center;font-size:21px;line-height:32px;color:#6a6a6a;white-space:normal">OBD(confirmed)<br>completed</div>
<div class="a" style="left:1467.2px;top:162.0px;width:241.0px;height:185.0px;background:#fff"></div>
<div class="t" style="left:1467.2px;top:185.0px;width:241px;text-align:center;font-weight:bold;font-size:52px;line-height:60px;color:#4fd1c5">4</div>
<div class="t" style="left:1467.2px;top:271.0px;width:241px;text-align:center;font-size:21px;line-height:32px;color:#6a6a6a;white-space:normal">Inventory ongoing</div>
<div class="a" style="left:1737.5px;top:162.0px;width:241.0px;height:185.0px;background:#fff"></div>
<div class="t" style="left:1749.5px;top:185.0px;width:241px;text-align:center;font-weight:bold;font-size:52px;line-height:60px;color:#a86ee6">156</div>
<div class="t" style="left:1737.5px;top:271.0px;width:241px;text-align:center;font-size:21px;line-height:32px;color:#6a6a6a;white-space:normal">Inventory finished</div>
<div class="a" style="left:2007.8px;top:162.0px;width:241.0px;height:185.0px;background:#fff"></div>
<div class="t" style="left:2007.8px;top:185.0px;width:241px;text-align:center;font-weight:bold;font-size:52px;line-height:60px;color:#f26fb0">66</div>
<div class="t" style="left:2007.8px;top:271.0px;width:241px;text-align:center;font-size:21px;line-height:32px;color:#6a6a6a;white-space:normal">IBD(palletized) on-<br>going</div>
<div class="a" style="left:2278.1px;top:162.0px;width:241.0px;height:185.0px;background:#fff"></div>
<div class="t" style="left:2278.1px;top:185.0px;width:241px;text-align:center;font-weight:bold;font-size:52px;line-height:60px;color:#f7c948">0</div>
<div class="t" style="left:2278.1px;top:271.0px;width:241px;text-align:center;font-size:21px;line-height:32px;color:#6a6a6a;white-space:normal">OBD(palletized) on-<br>going</div>
<div class="a" style="left:386.0px;top:369.0px;width:511.0px;height:471.0px;background:#fff"></div>
<div class="a" style="left:386.0px;top:432.0px;width:511.0px;height:1.0px;background:#eef0f3"></div>
<svg class="a" style="left:411px;top:389px" width="21" height="20" viewBox="0 0 21 20"><rect x="1" y="1" width="19" height="18" fill="none" stroke="#777" stroke-width="2"/><path d="M10.5 15 V6 M7 9 L10.5 5.5 L14 9 M6 4 H15" stroke="#777" stroke-width="1.8" fill="none"/></svg>
<div class="t" style="left:438.0px;top:388.0px;font-size:20.6px;color:#444;line-height:24px">Storage Statistics By Year</div>
<div class="a" style="left:786.0px;top:389.0px;width:60.0px;height:38.0px;background:#eef8e8;border-radius:3px"></div>
<div class="t" style="left:786.0px;top:398.0px;width:60px;text-align:center;font-size:15px;color:#67c23a;line-height:20px">Year</div>
<div class="a" style="left:925.0px;top:369.0px;width:512.0px;height:471.0px;background:#fff"></div>
<div class="a" style="left:925.0px;top:432.0px;width:512.0px;height:1.0px;background:#eef0f3"></div>
<svg class="a" style="left:950px;top:389px" width="21" height="20" viewBox="0 0 21 20"><rect x="1" y="1" width="19" height="18" fill="none" stroke="#777" stroke-width="2"/><path d="M10.5 15 V6 M7 9 L10.5 5.5 L14 9 M6 4 H15" stroke="#777" stroke-width="1.8" fill="none"/></svg>
<div class="t" style="left:977.0px;top:388.0px;font-size:20.6px;color:#444;line-height:24px">Storage Statistics By Day</div>
<div class="a" style="left:1328.0px;top:389.0px;width:56.0px;height:38.0px;background:#fdf5ec;border-radius:3px"></div>
<div class="t" style="left:1328.0px;top:398.0px;width:56px;text-align:center;font-size:15px;color:#e6a23c;line-height:20px">Day</div>
<div class="a" style="left:1467.0px;top:369.0px;width:1051.0px;height:471.0px;background:#fff"></div>
<div class="a" style="left:1467.0px;top:432.0px;width:1051.0px;height:1.0px;background:#eef0f3"></div>
<svg class="a" style="left:1492px;top:389px" width="21" height="20" viewBox="0 0 21 20"><rect x="1" y="1" width="19" height="18" fill="none" stroke="#777" stroke-width="2"/><path d="M10.5 15 V6 M7 9 L10.5 5.5 L14 9 M6 4 H15" stroke="#777" stroke-width="1.8" fill="none"/></svg>
<div class="t" style="left:1519.0px;top:388.0px;font-size:20.6px;color:#444;line-height:24px">Storage Statistics By Month</div>
<div class="a" style="left:2397.0px;top:389.0px;width:70.0px;height:40.0px;background:#ecf4fd;border-radius:3px"></div>
<div class="t" style="left:2397.0px;top:398.0px;width:70px;text-align:center;font-size:15px;color:#409eff;line-height:20px">Month</div>
<div class="a" style="left:385.0px;top:863.0px;width:1000.0px;height:452.0px;background:#fff"></div>
<div class="a" style="left:385.0px;top:925.0px;width:1000.0px;height:1.0px;background:#eef0f3"></div>
<svg class="a" style="left:411px;top:882px" width="21" height="20" viewBox="0 0 21 20"><rect x="1" y="1" width="19" height="18" fill="none" stroke="#777" stroke-width="2"/><path d="M10.5 15 V6 M7 9 L10.5 5.5 L14 9 M6 4 H15" stroke="#777" stroke-width="1.8" fill="none"/></svg>
<div class="t" style="left:438.0px;top:881.0px;font-size:20.6px;color:#444;line-height:24px">Total qty</div>
<div class="t" style="left:390.0px;top:1018.0px;width:100px;text-align:right;font-size:16px;color:#666;line-height:18px">15,000</div>
<div class="a" style="left:500.0px;top:1027.0px;width:40.0px;height:1.0px;border-top:1px dashed #ddd"></div>
<div class="t" style="left:390.0px;top:1057.0px;width:100px;text-align:right;font-size:16px;color:#666;line-height:18px">12,000</div>
<div class="a" style="left:500.0px;top:1066.0px;width:40.0px;height:1.0px;border-top:1px dashed #ddd"></div>
<div class="t" style="left:390.0px;top:1097.0px;width:100px;text-align:right;font-size:16px;color:#666;line-height:18px">9,000</div>
<div class="a" style="left:500.0px;top:1106.0px;width:40.0px;height:1.0px;border-top:1px dashed #ddd"></div>
<div class="t" style="left:390.0px;top:1135.0px;width:100px;text-align:right;font-size:16px;color:#666;line-height:18px">6,000</div>
<div class="a" style="left:500.0px;top:1144.0px;width:40.0px;height:1.0px;border-top:1px dashed #ddd"></div>
<div class="t" style="left:390.0px;top:1174.0px;width:100px;text-align:right;font-size:16px;color:#666;line-height:18px">3,000</div>
<div class="a" style="left:500.0px;top:1183.0px;width:40.0px;height:1.0px;border-top:1px dashed #ddd"></div>
<div class="t" style="left:390.0px;top:1212.0px;width:100px;text-align:right;font-size:16px;color:#666;line-height:18px">0</div>
<div class="a" style="left:500.0px;top:1221.0px;width:40.0px;height:1.0px;background:#ccc"></div>
<div class="a" style="left:733.0px;top:465.6px;width:31.6px;height:16.0px;background:#c6b2f2;border-radius:3px"></div>
<div class="t" style="left:771.0px;top:463.0px;font-size:16px;color:#555;line-height:20px">Out</div>
<div class="a" style="left:812.0px;top:465.6px;width:31.6px;height:16.0px;background:#33d3d8;border-radius:3px"></div>
<div class="t" style="left:850.0px;top:463.0px;font-size:16px;color:#555;line-height:20px">In</div>
<div class="t" style="left:458.0px;top:499.0px;font-size:16px;color:#777;line-height:18px">Quantity</div>
<div class="a" style="left:418.0px;top:528.0px;width:28.5px;height:129.0px;background:#686868;border-radius:5px"></div>
<div class="a" style="left:449.0px;top:528.0px;width:27.0px;height:127.0px;background:#686868;border-radius:5px"></div>
<div class="a" style="left:497.0px;top:536.0px;width:329.0px;height:76.0px;background:#cacaca"></div>
<div class="a" style="left:490.0px;top:536.0px;width:7.0px;height:121.0px;background:#6a6a6a"></div>
<div class="a" style="left:492.7px;top:578.0px;width:10.2px;height:75.0px;background:#33d3d8"></div>
<div class="a" style="left:521.0px;top:587.0px;width:10.3px;height:66.0px;background:#33d3d8"></div>
<div class="a" style="left:549.5px;top:558.8px;width:10.2px;height:94.2px;background:#33d3d8"></div>
<div class="a" style="left:576.7px;top:562.0px;width:10.3px;height:91.0px;background:#33d3d8"></div>
<div class="a" style="left:605.0px;top:580.0px;width:10.0px;height:73.0px;background:#33d3d8"></div>
<div class="a" style="left:632.4px;top:590.6px;width:10.2px;height:62.4px;background:#33d3d8"></div>
<div class="a" style="left:506.3px;top:564.5px;width:9.1px;height:88.5px;background:#c6b2f2"></div>
<div class="a" style="left:534.7px;top:592.8px;width:9.1px;height:60.2px;background:#c6b2f2"></div>
<div class="a" style="left:560.8px;top:552.0px;width:11.4px;height:101.0px;background:#c6b2f2"></div>
<div class="a" style="left:589.2px;top:563.3px;width:10.2px;height:89.7px;background:#c6b2f2"></div>
<div class="a" style="left:617.6px;top:577.0px;width:10.2px;height:76.0px;background:#c6b2f2"></div>
<div class="a" style="left:646.0px;top:591.7px;width:9.0px;height:61.3px;background:#c6b2f2"></div>
<div class="t" style="left:499.0px;top:657.0px;font-size:16px;color:#777;line-height:18px">1</div>
<div class="a" style="left:1272.8px;top:465.6px;width:31.6px;height:16.0px;background:#5ab4f5;border-radius:3px"></div>
<div class="t" style="left:1310.8px;top:463.0px;font-size:16px;color:#555;line-height:20px">Out</div>
<div class="a" style="left:1352.7px;top:465.6px;width:31.6px;height:16.0px;background:#fcc48a;border-radius:3px"></div>
<div class="t" style="left:1390.7px;top:463.0px;font-size:16px;color:#555;line-height:20px">In</div>
<div class="t" style="left:967.7px;top:499.0px;font-size:16px;color:#777;line-height:18px">Quantity</div>
<div class="a" style="left:999.5px;top:536.0px;width:366.0px;height:1.5px;background:#e4e4e4"></div>
<div class="a" style="left:994.0px;top:536.0px;width:6.0px;height:1.2px;background:#666"></div>
<div class="t" style="left:940.0px;top:527.0px;width:45px;text-align:right;font-size:16px;color:#666;line-height:18px">200</div>
<div class="a" style="left:999.5px;top:564.5px;width:366.0px;height:1.5px;background:#e4e4e4"></div>
<div class="a" style="left:994.0px;top:564.5px;width:6.0px;height:1.2px;background:#666"></div>
<div class="t" style="left:940.0px;top:555.5px;width:45px;text-align:right;font-size:16px;color:#666;line-height:18px">150</div>
<div class="a" style="left:999.5px;top:594.0px;width:366.0px;height:1.5px;background:#e4e4e4"></div>
<div class="a" style="left:994.0px;top:594.0px;width:6.0px;height:1.2px;background:#666"></div>
<div class="t" style="left:940.0px;top:585.0px;width:45px;text-align:right;font-size:16px;color:#666;line-height:18px">100</div>
<div class="a" style="left:999.0px;top:533.0px;width:1.5px;height:80.0px;background:#666"></div>
<div class="a" style="left:1123.3px;top:536.0px;width:4.6px;height:84.0px;background:#fcc48a"></div>
<div class="a" style="left:1131.3px;top:536.0px;width:4.5px;height:84.0px;background:#5ab4f5"></div>
<div class="a" style="left:1139.2px;top:536.0px;width:4.6px;height:84.0px;background:#fcc48a"></div>
<div class="a" style="left:1146.0px;top:536.0px;width:4.6px;height:84.0px;background:#5ab4f5"></div>
<div class="a" style="left:1154.0px;top:555.4px;width:4.5px;height:64.6px;background:#fcc48a"></div>
<div class="a" style="left:1160.8px;top:536.0px;width:5.7px;height:84.0px;background:#5ab4f5"></div>
<div class="a" style="left:1176.7px;top:536.0px;width:4.6px;height:84.0px;background:#5ab4f5"></div>
<div class="a" style="left:1184.7px;top:536.0px;width:4.5px;height:84.0px;background:#fcc48a"></div>
<div class="a" style="left:1191.5px;top:536.0px;width:5.5px;height:84.0px;background:#5ab4f5"></div>
<div class="a" style="left:1200.5px;top:536.0px;width:4.5px;height:84.0px;background:#fcc48a"></div>
<div class="a" style="left:1215.3px;top:536.0px;width:4.5px;height:84.0px;background:#fcc48a"></div>
<div class="a" style="left:1230.0px;top:572.6px;width:4.6px;height:47.4px;background:#fcc48a"></div>
<div class="a" style="left:1582.0px;top:535.0px;width:873.0px;height:1.0px;border-top:1.5px dashed #dedede"></div>
<div class="t" style="left:1471.0px;top:526.0px;width:100px;text-align:right;font-size:16px;color:#666;line-height:18px">21,000</div>
<div class="a" style="left:1582.0px;top:563.0px;width:873.0px;height:1.0px;border-top:1.5px dashed #dedede"></div>
<div class="t" style="left:1471.0px;top:554.0px;width:100px;text-align:right;font-size:16px;color:#666;line-height:18px">18,000</div>
<div class="a" style="left:1582.0px;top:591.0px;width:873.0px;height:1.0px;border-top:1.5px dashed #dedede"></div>
<div class="t" style="left:1471.0px;top:582.0px;width:100px;text-align:right;font-size:16px;color:#666;line-height:18px">15,000</div>
<div class="a" style="left:1582.0px;top:619.0px;width:873.0px;height:1.0px;border-top:1.5px dashed #dedede"></div>
<div class="t" style="left:1471.0px;top:610.0px;width:100px;text-align:right;font-size:16px;color:#666;line-height:18px">12,000</div>
<svg class="a" style="left:1460px;top:530px" width="1000" height="90" viewBox="1460 530 1000 90"><g fill="none" stroke-width="2.6" stroke-linejoin="round"><path d="M1705 612 L1721 563 L1751 612" stroke="#3d8fe6"/><path d="M1733 612 L1760 587 L1773.6 612" stroke="#33b552"/><path d="M1953 612 L1959 593 L1980 612" stroke="#33b552"/><path d="M2066 612 L2078 592 L2091 612" stroke="#33b552"/><path d="M2066 612 L2078 603 L2091 612" stroke="#3d8fe6"/><path d="M2307 612 L2316 600 L2326 612" stroke="#33b552"/><path d="M2369 612 L2395 546 L2423.6 612" stroke="#33b552"/></g><g fill="#33b552"><circle cx="1760" cy="587" r="4.5"/><circle cx="1959" cy="593" r="4.5"/><circle cx="2078" cy="592" r="4.5"/><circle cx="2316" cy="600" r="4.5"/><circle cx="2395" cy="546" r="4.5"/></g><g fill="#3d8fe6"><circle cx="1721" cy="563" r="4.5"/><circle cx="2078" cy="603" r="4.5"/></g></svg>
</div></div>
<div class="a" style="left:473.0px;top:616.0px;width:46.0px;height:1268.0px;background:linear-gradient(90deg,rgba(0,0,0,0),rgba(0,0,0,0.38))"></div>
<div class="a" style="left:519.0px;top:1874.0px;width:2550.0px;height:14.0px;background:linear-gradient(180deg,rgba(0,0,0,0.22),rgba(0,0,0,0))"></div>
<div class="a" style="left:519px;top:612px;width:2550px;height:1262px;overflow:hidden"><div class="a" style="left:-519px;top:-612px;width:3146px;height:1965px">
<div class="a" style="left:519.0px;top:612.0px;width:2550.0px;height:1262.0px;background:#f0f0f0"></div>
<div class="a" style="left:519.0px;top:612.0px;width:2550.0px;height:90.0px;background:linear-gradient(180deg,#ffffff 0%,#fdfdfd 35%,#f1f1f1 100%)"></div>
<div class="a" style="left:522.0px;top:614.0px;width:20.0px;height:13.0px;background:linear-gradient(180deg,#222 0,#222 45%,#d33 45%,#d33 100%)"></div>
<div class="t" style="left:550.0px;top:612.0px;font-size:15px;color:#bcbcbc;line-height:18px">ASC-WCS</div>
<div class="a" style="left:2911.0px;top:618.0px;width:13.0px;height:1.0px;background:#bbb"></div>
<div class="a" style="left:2971.0px;top:613.0px;width:10.0px;height:10.0px;border:1px solid #bbb"></div>
<div class="t" style="left:3031.0px;top:606.0px;font-size:15px;color:#bbb;line-height:18px">&#x2715;</div>
<div class="a" style="left:525.0px;top:643.0px;width:2.0px;height:2.0px;background:#aaa"></div>
<div class="a" style="left:525.0px;top:647.0px;width:2.0px;height:2.0px;background:#aaa"></div>
<div class="a" style="left:525.0px;top:651.0px;width:2.0px;height:2.0px;background:#aaa"></div>
<div class="a" style="left:525.0px;top:655.0px;width:2.0px;height:2.0px;background:#aaa"></div>
<div class="a" style="left:525.0px;top:659.0px;width:2.0px;height:2.0px;background:#aaa"></div>
<div class="a" style="left:525.0px;top:663.0px;width:2.0px;height:2.0px;background:#aaa"></div>
<svg class="a" style="left:536px;top:640px" width="24" height="25" viewBox="0 0 24 25"><rect x="0" y="0" width="24" height="25" fill="#e6e6e6"/><path d="M4 3 L21 12.5 L4 22 Z" fill="#c4c4c4"/></svg>
<div class="t" style="left:565.0px;top:642.0px;font-size:15.3px;color:#9a9a9a;line-height:20px">Connect Devices</div>
<div class="a" style="left:693.0px;top:640.0px;width:25.0px;height:25.0px;background:#e03434"></div>
<div class="t" style="left:723.0px;top:642.0px;font-size:15.3px;color:#222;line-height:20px">DisConnect Devices</div>
<div class="t" style="left:875.0px;top:642.0px;font-size:15.3px;color:#222;line-height:20px">Settings</div>
<div class="a" style="left:938.0px;top:651.0px;width:0.0px;height:0.0px;border-left:4px solid transparent;border-right:4px solid transparent;border-top:4px solid #333"></div>
<svg class="a" style="left:955px;top:639px" width="25" height="27" viewBox="0 0 25 27"><rect x="1" y="4" width="12" height="22" fill="#2a8fd8"/><rect x="3" y="7" width="8" height="10" fill="#bfe6ff"/><circle cx="7" cy="14" r="2" fill="#f5d020"/><path d="M18 1 V9 M15 4 H21 V9 Q18 13 18 16 V26" stroke="#335" stroke-width="2" fill="none"/></svg>
<div class="t" style="left:986.0px;top:642.0px;font-size:15.3px;color:#222;line-height:20px">Turn on automatic charging</div>
<svg class="a" style="left:1196px;top:640px" width="24" height="26" viewBox="0 0 24 26"><path d="M2 1 H15 L22 8 V25 H2 Z" fill="#e4e4e4" stroke="#d0d0d0"/><circle cx="14" cy="18" r="6" fill="none" stroke="#c8c8c8" stroke-width="2"/></svg>
<div class="t" style="left:1225.0px;top:642.0px;font-size:15.3px;color:#a8a8a8;line-height:20px">Thun Oto Mati&#263; Chagin</div>
<svg class="a" style="left:1400px;top:639px" width="27" height="27" viewBox="0 0 27 27"><circle cx="18" cy="8" r="6.5" fill="none" stroke="#e8a820" stroke-width="4"/><path d="M13 13 L3 23 M5 20 L8 23 M8 17 L11 20" stroke="#e8a820" stroke-width="3.5" fill="none"/></svg>
<div class="t" style="left:1431.0px;top:642.0px;font-size:15.3px;color:#222;line-height:20px">Get administrative privileges</div>
<div class="a" style="left:519.0px;top:669.0px;width:1224.0px;height:453.0px;background:#fff;border:3px solid #777;border-radius:2px"></div>
<div class="a" style="left:522.0px;top:698.0px;width:1197.0px;height:26.5px;background:#dcfafa;border-bottom:1px solid #d6dede"></div>
<div class="m" style="left:776.0px;top:703.0px;font-size:13.33px;line-height:12.308px;color:#222;transform:scaleY(1.3);transform-origin:0 0;-webkit-text-stroke:0.3px #222;">20102197</div>
<div class="m" style="left:863.0px;top:703.0px;font-size:13.33px;line-height:12.308px;color:#222;transform:scaleY(1.3);transform-origin:0 0;-webkit-text-stroke:0.3px #222;">2024-01-09 14:19:11</div>
<div class="a" style="left:522.0px;top:724.5px;width:1197.0px;height:26.5px;background:#fff;border-bottom:1px solid #d6dede"></div>
<div class="m" style="left:776.0px;top:729.5px;font-size:13.33px;line-height:12.308px;color:#222;transform:scaleY(1.3);transform-origin:0 0;-webkit-text-stroke:0.3px #222;">20100074</div>
<div class="m" style="left:863.0px;top:729.5px;font-size:13.33px;line-height:12.308px;color:#222;transform:scaleY(1.3);transform-origin:0 0;-webkit-text-stroke:0.3px #222;">2024-01-16 13:44:11</div>
<div class="a" style="left:522.0px;top:751.0px;width:1197.0px;height:26.5px;background:#dcfafa;border-bottom:1px solid #d6dede"></div>
<div class="m" style="left:776.0px;top:756.0px;font-size:13.33px;line-height:12.308px;color:#222;transform:scaleY(1.3);transform-origin:0 0;-webkit-text-stroke:0.3px #222;">20100096</div>
<div class="m" style="left:863.0px;top:756.0px;font-size:13.33px;line-height:12.308px;color:#222;transform:scaleY(1.3);transform-origin:0 0;-webkit-text-stroke:0.3px #222;">2024-02-22 13:53:47</div>
<div class="a" style="left:522.0px;top:777.5px;width:1197.0px;height:26.5px;background:#fff;border-bottom:1px solid #d6dede"></div>
<div class="m" style="left:522.0px;top:782.5px;font-size:13.33px;line-height:12.308px;color:#222;transform:scaleY(1.3);transform-origin:0 0;-webkit-text-stroke:0.3px #222;">cute changefloor task complated</div>
<div class="m" style="left:776.0px;top:782.5px;font-size:13.33px;line-height:12.308px;color:#222;transform:scaleY(1.3);transform-origin:0 0;-webkit-text-stroke:0.3px #222;">20102046</div>
<div class="m" style="left:863.0px;top:782.5px;font-size:13.33px;line-height:12.308px;color:#222;transform:scaleY(1.3);transform-origin:0 0;-webkit-text-stroke:0.3px #222;">2024-02-27 13:42:53</div>
<div class="a" style="left:522.0px;top:804.0px;width:1197.0px;height:26.5px;background:#dcfafa;border-bottom:1px solid #d6dede"></div>
<div class="m" style="left:776.0px;top:809.0px;font-size:13.33px;line-height:12.308px;color:#222;transform:scaleY(1.3);transform-origin:0 0;-webkit-text-stroke:0.3px #222;">20100014</div>
<div class="m" style="left:863.0px;top:809.0px;font-size:13.33px;line-height:12.308px;color:#222;transform:scaleY(1.3);transform-origin:0 0;-webkit-text-stroke:0.3px #222;">2024-02-27 15:44:08</div>
<div class="a" style="left:522.0px;top:830.5px;width:1197.0px;height:26.5px;background:#fff;border-bottom:1px solid #d6dede"></div>
<div class="m" style="left:776.0px;top:835.5px;font-size:13.33px;line-height:12.308px;color:#222;transform:scaleY(1.3);transform-origin:0 0;-webkit-text-stroke:0.3px #222;">20100076</div>
<div class="m" style="left:863.0px;top:835.5px;font-size:13.33px;line-height:12.308px;color:#222;transform:scaleY(1.3);transform-origin:0 0;-webkit-text-stroke:0.3px #222;">2024-02-27 15:48:06</div>
<div class="a" style="left:522.0px;top:857.0px;width:1197.0px;height:26.5px;background:#dcfafa;border-bottom:1px solid #d6dede"></div>
<div class="m" style="left:776.0px;top:862.0px;font-size:13.33px;line-height:12.308px;color:#222;transform:scaleY(1.3);transform-origin:0 0;-webkit-text-stroke:0.3px #222;">20100138</div>
<div class="m" style="left:863.0px;top:862.0px;font-size:13.33px;line-height:12.308px;color:#222;transform:scaleY(1.3);transform-origin:0 0;-webkit-text-stroke:0.3px #222;">2024-02-27 15:58:41</div>
<div class="a" style="left:522.0px;top:883.5px;width:1197.0px;height:26.5px;background:#fff;border-bottom:1px solid #d6dede"></div>
<div class="m" style="left:522.0px;top:888.5px;font-size:13.33px;line-height:12.308px;color:#222;transform:scaleY(1.3);transform-origin:0 0;-webkit-text-stroke:0.3px #222;">cute changefloor task complated</div>
<div class="m" style="left:776.0px;top:888.5px;font-size:13.33px;line-height:12.308px;color:#222;transform:scaleY(1.3);transform-origin:0 0;-webkit-text-stroke:0.3px #222;">20100380</div>
<div class="m" style="left:863.0px;top:888.5px;font-size:13.33px;line-height:12.308px;color:#222;transform:scaleY(1.3);transform-origin:0 0;-webkit-text-stroke:0.3px #222;">2024-02-28 10:38:23</div>
<div class="a" style="left:522.0px;top:910.0px;width:1197.0px;height:26.5px;background:#dcfafa;border-bottom:1px solid #d6dede"></div>
<div class="m" style="left:776.0px;top:915.0px;font-size:13.33px;line-height:12.308px;color:#222;transform:scaleY(1.3);transform-origin:0 0;-webkit-text-stroke:0.3px #222;">20100965</div>
<div class="m" style="left:863.0px;top:915.0px;font-size:13.33px;line-height:12.308px;color:#222;transform:scaleY(1.3);transform-origin:0 0;-webkit-text-stroke:0.3px #222;">2024-02-29 16:28:55</div>
<div class="a" style="left:522.0px;top:936.5px;width:1197.0px;height:26.5px;background:#fff;border-bottom:1px solid #d6dede"></div>
<div class="m" style="left:522.0px;top:941.5px;font-size:13.33px;line-height:12.308px;color:#222;transform:scaleY(1.3);transform-origin:0 0;-webkit-text-stroke:0.3px #222;">cute changefloor task complated</div>
<div class="m" style="left:776.0px;top:941.5px;font-size:13.33px;line-height:12.308px;color:#222;transform:scaleY(1.3);transform-origin:0 0;-webkit-text-stroke:0.3px #222;">20100955</div>
<div class="m" style="left:863.0px;top:941.5px;font-size:13.33px;line-height:12.308px;color:#222;transform:scaleY(1.3);transform-origin:0 0;-webkit-text-stroke:0.3px #222;">2024-02-29 16:41:51</div>
<div class="a" style="left:522.0px;top:963.0px;width:1197.0px;height:26.5px;background:#dcfafa;border-bottom:1px solid #d6dede"></div>
<div class="m" style="left:776.0px;top:968.0px;font-size:13.33px;line-height:12.308px;color:#222;transform:scaleY(1.3);transform-origin:0 0;-webkit-text-stroke:0.3px #222;">20100964</div>
<div class="m" style="left:863.0px;top:968.0px;font-size:13.33px;line-height:12.308px;color:#222;transform:scaleY(1.3);transform-origin:0 0;-webkit-text-stroke:0.3px #222;">2024-02-29 16:45:41</div>
<div class="a" style="left:522.0px;top:989.5px;width:1197.0px;height:26.5px;background:#fff;border-bottom:1px solid #d6dede"></div>
<div class="m" style="left:776.0px;top:994.5px;font-size:13.33px;line-height:12.308px;color:#222;transform:scaleY(1.3);transform-origin:0 0;-webkit-text-stroke:0.3px #222;">20100935</div>
<div class="m" style="left:863.0px;top:994.5px;font-size:13.33px;line-height:12.308px;color:#222;transform:scaleY(1.3);transform-origin:0 0;-webkit-text-stroke:0.3px #222;">2024-03-19 11:12:53</div>
<div class="a" style="left:522.0px;top:1016.0px;width:1197.0px;height:26.5px;background:#dcfafa;border-bottom:1px solid #d6dede"></div>
<div class="m" style="left:776.0px;top:1021.0px;font-size:13.33px;line-height:12.308px;color:#222;transform:scaleY(1.3);transform-origin:0 0;-webkit-text-stroke:0.3px #222;">20102134</div>
<div class="m" style="left:863.0px;top:1021.0px;font-size:13.33px;line-height:12.308px;color:#222;transform:scaleY(1.3);transform-origin:0 0;-webkit-text-stroke:0.3px #222;">2024-04-04 10:40:59</div>
<div class="a" style="left:522.0px;top:1042.5px;width:1197.0px;height:26.5px;background:#fff;border-bottom:1px solid #d6dede"></div>
<div class="m" style="left:776.0px;top:1047.5px;font-size:13.33px;line-height:12.308px;color:#222;transform:scaleY(1.3);transform-origin:0 0;-webkit-text-stroke:0.3px #222;">20101272</div>
<div class="m" style="left:863.0px;top:1047.5px;font-size:13.33px;line-height:12.308px;color:#222;transform:scaleY(1.3);transform-origin:0 0;-webkit-text-stroke:0.3px #222;">2024-04-23 13:12:43</div>
<div class="a" style="left:522.0px;top:1069.0px;width:1197.0px;height:26.5px;background:#dcfafa;border-bottom:1px solid #d6dede"></div>
<div class="m" style="left:776.0px;top:1074.0px;font-size:13.33px;line-height:12.308px;color:#222;transform:scaleY(1.3);transform-origin:0 0;-webkit-text-stroke:0.3px #222;">20100315</div>
<div class="m" style="left:863.0px;top:1074.0px;font-size:13.33px;line-height:12.308px;color:#222;transform:scaleY(1.3);transform-origin:0 0;-webkit-text-stroke:0.3px #222;">2024-06-07 15:22:48</div>
<div class="a" style="left:773.0px;top:671.0px;width:1.0px;height:425.0px;background:#b8c4cc"></div>
<div class="a" style="left:859.5px;top:671.0px;width:1.0px;height:425.0px;background:#b8c4cc"></div>
<div class="a" style="left:1019.6px;top:671.0px;width:1.0px;height:425.0px;background:#b8c4cc"></div>
<div class="a" style="left:1146.6px;top:671.0px;width:1.0px;height:425.0px;background:#b8c4cc"></div>
<div class="a" style="left:1256.0px;top:671.0px;width:1.0px;height:425.0px;background:#b8c4cc"></div>
<div class="a" style="left:1358.5px;top:671.0px;width:1.0px;height:425.0px;background:#b8c4cc"></div>
<div class="a" style="left:1452.5px;top:671.0px;width:1.0px;height:425.0px;background:#b8c4cc"></div>
<div class="a" style="left:1539.0px;top:671.0px;width:1.0px;height:425.0px;background:#b8c4cc"></div>
<div class="a" style="left:1625.0px;top:671.0px;width:1.0px;height:425.0px;background:#b8c4cc"></div>
<div class="m" style="left:522.0px;top:676.0px;font-size:13.33px;line-height:12.308px;color:#222;transform:scaleY(1.3);transform-origin:0 0;-webkit-text-stroke:0.3px #222;font-weight:bold">ark</div>
<div class="m" style="left:781.0px;top:676.0px;font-size:13.33px;line-height:12.308px;color:#222;transform:scaleY(1.3);transform-origin:0 0;-webkit-text-stroke:0.3px #222;font-weight:bold">No.Pallet</div>
<div class="m" style="left:868.0px;top:676.0px;font-size:13.33px;line-height:12.308px;color:#222;transform:scaleY(1.3);transform-origin:0 0;-webkit-text-stroke:0.3px #222;font-weight:bold">TaskTime</div>
<div class="m" style="left:1027.0px;top:676.0px;font-size:13.33px;line-height:12.308px;color:#222;transform:scaleY(1.3);transform-origin:0 0;-webkit-text-stroke:0.3px #222;font-weight:bold">TargetLocation</div>
<div class="m" style="left:1152.0px;top:676.0px;font-size:13.33px;line-height:12.308px;color:#222;transform:scaleY(1.3);transform-origin:0 0;-webkit-text-stroke:0.3px #222;font-weight:bold">Warelocation</div>
<div class="m" style="left:1264.0px;top:676.0px;font-size:13.33px;line-height:12.308px;color:#222;transform:scaleY(1.3);transform-origin:0 0;-webkit-text-stroke:0.3px #222;font-weight:bold">Channel.Get</div>
<div class="m" style="left:1366.0px;top:676.0px;font-size:13.33px;line-height:12.308px;color:#222;transform:scaleY(1.3);transform-origin:0 0;-webkit-text-stroke:0.3px #222;font-weight:bold">Column.Get</div>
<div class="m" style="left:1461.0px;top:676.0px;font-size:13.33px;line-height:12.308px;color:#222;transform:scaleY(1.3);transform-origin:0 0;-webkit-text-stroke:0.3px #222;font-weight:bold">Floor.Get</div>
<div class="m" style="left:1547.0px;top:676.0px;font-size:13.33px;line-height:12.308px;color:#222;transform:scaleY(1.3);transform-origin:0 0;-webkit-text-stroke:0.3px #222;font-weight:bold">Shelf.Get</div>
<div class="m" style="left:1633.0px;top:676.0px;font-size:13.33px;line-height:12.308px;color:#222;transform:scaleY(1.3);transform-origin:0 0;-webkit-text-stroke:0.3px #222;font-weight:bold">Channel.Put</div>
<div class="a" style="left:1719.0px;top:672.0px;width:21.0px;height:424.0px;background:#f0f0f0"></div>
<div class="a" style="left:1721.0px;top:990.0px;width:17.0px;height:84.0px;background:#cdcdcd"></div>
<div class="t" style="left:1722.0px;top:673.0px;font-size:16px;color:#555;line-height:16px">&#x2303;</div>
<div class="t" style="left:1723.0px;top:1076.0px;font-size:16px;color:#555;line-height:16px">&#x2304;</div>
<div class="a" style="left:522.0px;top:1096.0px;width:1197.0px;height:24.0px;background:#f0f0f0"></div>
<div class="a" style="left:792.0px;top:1099.0px;width:630.0px;height:18.0px;background:#cdcdcd"></div>
<div class="t" style="left:526.0px;top:1098.0px;font-size:20px;color:#555;line-height:20px">&#x2039;</div>
<div class="t" style="left:1702.0px;top:1098.0px;font-size:20px;color:#555;line-height:20px">&#x203A;</div>
<div class="a" style="left:536.0px;top:1151.0px;width:455.0px;height:228.0px;border:1px solid #dcdcdc;box-shadow:1px 1px 0 #fff inset"></div>
<div class="a" style="left:540.0px;top:1143.0px;width:128.0px;height:16.0px;background:#f0f0f0"></div>
<div class="m" style="left:545.0px;top:1143.0px;font-size:13.33px;line-height:12.308px;color:#222;transform:scaleY(1.3);transform-origin:0 0;-webkit-text-stroke:0.3px #222;font-weight:bold">Process Control</div>
<div class="a" style="left:550.0px;top:1169.0px;width:125.0px;height:47.0px;background:#cccccc;border:1px solid #c0c0c0"></div>
<div class="m" style="left:562.0px;top:1184.0px;font-size:13.33px;line-height:12.308px;color:#a8a8a8;transform:scaleY(1.3);transform-origin:0 0;-webkit-text-stroke:0.3px #a8a8a8;">Task refresh</div>
<div class="a" style="left:689.0px;top:1169.0px;width:140.0px;height:47.0px;background:#cccccc;border:1px solid #c0c0c0"></div>
<div class="m" style="left:727.0px;top:1176.0px;font-size:13.33px;line-height:12.308px;color:#a8a8a8;transform:scaleY(1.3);transform-origin:0 0;-webkit-text-stroke:0.3px #a8a8a8;">Start</div>
<div class="m" style="left:708.0px;top:1191.0px;font-size:13.33px;line-height:12.308px;color:#a8a8a8;transform:scaleY(1.3);transform-origin:0 0;-webkit-text-stroke:0.3px #a8a8a8;">auto-execution</div>
<div class="a" style="left:841.0px;top:1169.0px;width:139.0px;height:47.0px;background:#e1e1e1;border:1px solid #adadad"></div>
<div class="m" style="left:902.0px;top:1176.0px;font-size:13.33px;line-height:12.308px;color:#222;transform:scaleY(1.3);transform-origin:0 0;-webkit-text-stroke:0.3px #222;font-weight:bold">End</div>
<div class="m" style="left:857.0px;top:1191.0px;font-size:13.33px;line-height:12.308px;color:#222;transform:scaleY(1.3);transform-origin:0 0;-webkit-text-stroke:0.3px #222;font-weight:bold">auto-execution</div>
<div class="a" style="left:548.0px;top:1273.5px;width:17.0px;height:17.0px;background:#fff;border:1.5px solid #777"></div>
<svg class="a" style="left:550px;top:1275px" width="13" height="13" viewBox="0 0 13 13"><path d="M2 6.5 L5 10 L11 2.5" stroke="#444" stroke-width="1.8" fill="none"/></svg>
<div class="m" style="left:571.0px;top:1274.0px;font-size:13.33px;line-height:12.308px;color:#222;transform:scaleY(1.3);transform-origin:0 0;-webkit-text-stroke:0.3px #222;">Can receive new tasks</div>
<div class="a" style="left:770.0px;top:1273.5px;width:17.0px;height:17.0px;background:#fff;border:1.5px solid #777"></div>
<svg class="a" style="left:772px;top:1275px" width="13" height="13" viewBox="0 0 13 13"><path d="M2 6.5 L5 10 L11 2.5" stroke="#444" stroke-width="1.8" fill="none"/></svg>
<div class="m" style="left:793.0px;top:1274.0px;font-size:13.33px;line-height:12.308px;color:#222;transform:scaleY(1.3);transform-origin:0 0;-webkit-text-stroke:0.3px #222;">Whether to recall</div>
<div class="a" style="left:548.0px;top:1309.5px;width:17.0px;height:17.0px;background:#fff;border:1.5px solid #777"></div>
<svg class="a" style="left:550px;top:1311px" width="13" height="13" viewBox="0 0 13 13"><path d="M2 6.5 L5 10 L11 2.5" stroke="#444" stroke-width="1.8" fill="none"/></svg>
<div class="m" style="left:571.0px;top:1310.0px;font-size:13.33px;line-height:12.308px;color:#222;transform:scaleY(1.3);transform-origin:0 0;-webkit-text-stroke:0.3px #222;">Displays the lock point</div>
<div class="a" style="left:770.0px;top:1309.5px;width:17.0px;height:17.0px;background:#fff;border:1.5px solid #777"></div>
<div class="m" style="left:793.0px;top:1310.0px;font-size:13.33px;line-height:12.308px;color:#222;transform:scaleY(1.3);transform-origin:0 0;-webkit-text-stroke:0.3px #222;">Displays the map route</div>
<div class="a" style="left:548.0px;top:1346.5px;width:17.0px;height:17.0px;background:#fff;border:1.5px solid #777"></div>
<div class="m" style="left:571.0px;top:1347.0px;font-size:13.33px;line-height:12.308px;color:#222;transform:scaleY(1.3);transform-origin:0 0;-webkit-text-stroke:0.3px #222;">Displays the cargo route</div>
<div class="a" style="left:1007.0px;top:1151.0px;width:410.0px;height:228.0px;border:1px solid #dcdcdc;box-shadow:1px 1px 0 #fff inset"></div>
<div class="a" style="left:1011.0px;top:1143.0px;width:128.0px;height:16.0px;background:#f0f0f0"></div>
<div class="m" style="left:1016.0px;top:1143.0px;font-size:13.33px;line-height:12.308px;color:#222;transform:scaleY(1.3);transform-origin:0 0;-webkit-text-stroke:0.3px #222;font-weight:bold">Task Statistics</div>
<div class="m" style="left:1015.0px;top:1182.0px;font-size:13.33px;line-height:12.308px;color:#222;transform:scaleY(1.3);transform-origin:0 0;-webkit-text-stroke:0.3px #222;">Total count of tasks: 66
Out: 0 | In: 66
Count of tasks being performed: 0
Out: 0 | In: 0</div>
<div class="m" style="left:1015.0px;top:1296.0px;font-size:13.33px;line-height:12.308px;color:#222;transform:scaleY(1.3);transform-origin:0 0;-webkit-text-stroke:0.3px #222;">Inbound prohibited areas: []
Outbound prohibited areas: []
Inbound prohibited ports: []
Outbound prohibited ports: []</div>
<div class="a" style="left:1426.0px;top:1151.0px;width:317.0px;height:228.0px;border:1px solid #dcdcdc;box-shadow:1px 1px 0 #fff inset"></div>
<div class="a" style="left:1430.0px;top:1143.0px;width:152.0px;height:16.0px;background:#f0f0f0"></div>
<div class="m" style="left:1435.0px;top:1143.0px;font-size:13.33px;line-height:12.308px;color:#222;transform:scaleY(1.3);transform-origin:0 0;-webkit-text-stroke:0.3px #222;font-weight:bold">Error Informations</div>
<div class="a" style="left:536.0px;top:1390.0px;width:460.0px;height:500.0px;background:#fff;border:1px solid #828790"></div>
<div class="m" style="left:540.0px;top:1393.0px;font-size:13.33px;line-height:12.308px;color:#222;transform:scaleY(1.3);transform-origin:0 0;-webkit-text-stroke:0.3px #222;">signal, task number: 25987
14:55:16 [TASK] [25985] 0 [S3] shuttle is in normal
condition
14:55:16 [TASK] [25985] 1 Inbound task sent
successfully for [S3] shuttle
14:55:16 [TASK] [25985] 2 Wait for the [S3] shuttle
to complete the inbound task
14:56:54 [TASK] [25988] 0 [S2] shuttle is in normal
condition
14:56:54 [TASK] [25988] 1 Inbound task sent
successfully for [S2] shuttle
14:56:54 [TASK] [25988] 2 Wait for the [S2] shuttle
to complete the inbound task
15:01:06 [DEVICE] [25985]  [S3] execute inbound task
complated
15:01:07 [TASK] [25985]  Get the task completion
signal, task number: 25985
15:01:20 [TASK] [32934] 0 [S3] shuttle is in normal
condition
15:01:20 [TASK] [32934] 1 Move/Charge task sent
successfully for [S3] shuttle
15:01:20 [TASK] [32934] 2 Wait for the [S3] shuttle
to complete the move/charge task
15:01:35 [DEVICE] [25988]  [S2] execute inbound task
complated
15:01:36 [TASK] [25988]  Get the task completion
signal, task number: 25988
15:06:09 [DEVICE] [32934]  [S3] execute charge task
complated
15:06:09 [TASK] [115410] 0 [S1] shuttle is in normal</div>
<div class="a" style="left:973.0px;top:1392.0px;width:21.0px;height:482.0px;background:#f0f0f0"></div>
<div class="a" style="left:975.0px;top:1683.0px;width:17.0px;height:191.0px;background:#cdcdcd"></div>
<div class="t" style="left:977.0px;top:1396.0px;font-size:16px;color:#555;line-height:16px">&#x2303;</div>
<div class="a" style="left:1008.0px;top:1401.0px;width:323.0px;height:224.0px;border:1px solid #dcdcdc;box-shadow:1px 1px 0 #fff inset"></div>
<div class="a" style="left:1012.0px;top:1393.0px;width:72.0px;height:16.0px;background:#f0f0f0"></div>
<div class="m" style="left:1017.0px;top:1393.0px;font-size:13.33px;line-height:12.308px;color:#222;transform:scaleY(1.3);transform-origin:0 0;-webkit-text-stroke:0.3px #222;font-weight:bold">Menu Tab</div>
<div class="a" style="left:1015.0px;top:1421.0px;width:130.0px;height:23.0px;background:#e1e1e1;border:1px solid #adadad"></div>
<div class="m" style="left:1032.0px;top:1424.0px;font-size:13.33px;line-height:12.308px;color:#222;transform:scaleY(1.3);transform-origin:0 0;-webkit-text-stroke:0.3px #222;">Show 7#F Map</div>
<div class="a" style="left:1156.0px;top:1421.0px;width:130.0px;height:23.0px;background:#e1e1e1;border:1px solid #adadad"></div>
<div class="m" style="left:1173.0px;top:1424.0px;font-size:13.33px;line-height:12.308px;color:#222;transform:scaleY(1.3);transform-origin:0 0;-webkit-text-stroke:0.3px #222;">Show 8#F Map</div>
<div class="a" style="left:1015.0px;top:1456.0px;width:130.0px;height:23.0px;background:#e1e1e1;border:1px solid #adadad"></div>
<div class="m" style="left:1032.0px;top:1459.0px;font-size:13.33px;line-height:12.308px;color:#222;transform:scaleY(1.3);transform-origin:0 0;-webkit-text-stroke:0.3px #222;">Show 9#F Map</div>
<div class="a" style="left:1156.0px;top:1456.0px;width:130.0px;height:23.0px;background:#e1e1e1;border:1px solid #adadad"></div>
<div class="m" style="left:1169.0px;top:1459.0px;font-size:13.33px;line-height:12.308px;color:#222;transform:scaleY(1.3);transform-origin:0 0;-webkit-text-stroke:0.3px #222;">Show 10#F Map</div>
<div class="a" style="left:1015.0px;top:1490.0px;width:130.0px;height:23.0px;background:#e1e1e1;border:1px solid #adadad"></div>
<div class="m" style="left:1028.0px;top:1493.0px;font-size:13.33px;line-height:12.308px;color:#222;transform:scaleY(1.3);transform-origin:0 0;-webkit-text-stroke:0.3px #222;">Show 11#F Map</div>
<div class="a" style="left:1156.0px;top:1490.0px;width:130.0px;height:23.0px;background:#e1e1e1;border:1px solid #adadad"></div>
<div class="m" style="left:1169.0px;top:1493.0px;font-size:13.33px;line-height:12.308px;color:#222;transform:scaleY(1.3);transform-origin:0 0;-webkit-text-stroke:0.3px #222;">Show 12#F Map</div>
<div class="a" style="left:1015.0px;top:1525.0px;width:130.0px;height:23.0px;background:#e1e1e1;border:1px solid #adadad"></div>
<div class="m" style="left:1028.0px;top:1528.0px;font-size:13.33px;line-height:12.308px;color:#222;transform:scaleY(1.3);transform-origin:0 0;-webkit-text-stroke:0.3px #222;">Show 13#F Map</div>
<div class="a" style="left:1156.0px;top:1525.0px;width:130.0px;height:23.0px;background:#e1e1e1;border:1px solid #adadad"></div>
<div class="m" style="left:1169.0px;top:1528.0px;font-size:13.33px;line-height:12.308px;color:#222;transform:scaleY(1.3);transform-origin:0 0;-webkit-text-stroke:0.3px #222;">Show 14#F Map</div>
<div class="a" style="left:1015.0px;top:1560.0px;width:130.0px;height:23.0px;background:#e1e1e1;border:1px solid #adadad"></div>
<div class="m" style="left:1052.0px;top:1563.0px;font-size:13.33px;line-height:12.308px;color:#222;transform:scaleY(1.3);transform-origin:0 0;-webkit-text-stroke:0.3px #222;">Shuttle</div>
<div class="a" style="left:1156.0px;top:1560.0px;width:130.0px;height:23.0px;background:#e1e1e1;border:1px solid #adadad"></div>
<div class="m" style="left:1189.0px;top:1563.0px;font-size:13.33px;line-height:12.308px;color:#222;transform:scaleY(1.3);transform-origin:0 0;-webkit-text-stroke:0.3px #222;">Conveyor</div>
<div class="a" style="left:1015.0px;top:1594.0px;width:269.0px;height:23.0px;background:#e1e1e1;border:1px solid #adadad"></div>
<div class="m" style="left:1089.5px;top:1597.0px;font-size:13.33px;line-height:12.308px;color:#222;transform:scaleY(1.3);transform-origin:0 0;-webkit-text-stroke:0.3px #222;">Task statistics</div>
<div class="a" style="left:1307.0px;top:1412.0px;width:20.0px;height:210.0px;background:#f0f0f0"></div>
<div class="a" style="left:1308.0px;top:1509.0px;width:18.0px;height:91.0px;background:#cdcdcd"></div>
<div class="t" style="left:1311.0px;top:1419.0px;font-size:16px;color:#555;line-height:16px">&#x2303;</div>
<div class="t" style="left:1311.0px;top:1602.0px;font-size:16px;color:#555;line-height:16px">&#x2304;</div>
<div class="a" style="left:1336.0px;top:1401.0px;width:407.0px;height:224.0px;border:1px solid #dcdcdc;box-shadow:1px 1px 0 #fff inset"></div>
<div class="a" style="left:1340.0px;top:1393.0px;width:112.0px;height:16.0px;background:#f0f0f0"></div>
<div class="m" style="left:1345.0px;top:1393.0px;font-size:13.33px;line-height:12.308px;color:#222;transform:scaleY(1.3);transform-origin:0 0;-webkit-text-stroke:0.3px #222;font-weight:bold">Thread Status</div>
<div class="m" style="left:1345.6px;top:1413.0px;font-size:13.33px;line-height:12.308px;color:#359535;transform:scaleY(1.3);transform-origin:0 0;-webkit-text-stroke:0.3px #359535;">&gt;&gt; Execute the main thread: True,1,0</div>
<div class="m" style="left:1345.6px;top:1439.6px;font-size:13.33px;line-height:12.308px;color:#359535;transform:scaleY(1.3);transform-origin:0 0;-webkit-text-stroke:0.3px #359535;">&gt;&gt; Shuttle's state read thread: True,0,0</div>
<div class="m" style="left:1345.6px;top:1466.2px;font-size:13.33px;line-height:12.308px;color:#359535;transform:scaleY(1.3);transform-origin:0 0;-webkit-text-stroke:0.3px #359535;">&gt;&gt; Task handle thread: True,310,1</div>
<div class="m" style="left:1345.6px;top:1492.8px;font-size:13.33px;line-height:12.308px;color:#359535;transform:scaleY(1.3);transform-origin:0 0;-webkit-text-stroke:0.3px #359535;">&gt;&gt; Shuttle's reconnects thread: True,0,2</div>
<div class="m" style="left:1345.6px;top:1519.4px;font-size:13.33px;line-height:12.308px;color:#359535;transform:scaleY(1.3);transform-origin:0 0;-webkit-text-stroke:0.3px #359535;">&gt;&gt; Shuttle's update location thread:</div>
<div class="m" style="left:1345.6px;top:1546.0px;font-size:13.33px;line-height:12.308px;color:#359535;transform:scaleY(1.3);transform-origin:0 0;-webkit-text-stroke:0.3px #359535;">&gt;&gt; Timeout information collection</div>
<div class="m" style="left:1345.6px;top:1572.6px;font-size:13.33px;line-height:12.308px;color:#359535;transform:scaleY(1.3);transform-origin:0 0;-webkit-text-stroke:0.3px #359535;">&gt;&gt; Location status update thread:</div>
<div class="a" style="left:1008.0px;top:1641.0px;width:744.0px;height:259.0px;border:1px solid #dcdcdc;box-shadow:1px 1px 0 #fff inset"></div>
<div class="a" style="left:1012.0px;top:1633.0px;width:112.0px;height:16.0px;background:#f0f0f0"></div>
<div class="m" style="left:1017.0px;top:1633.0px;font-size:13.33px;line-height:12.308px;color:#222;transform:scaleY(1.3);transform-origin:0 0;-webkit-text-stroke:0.3px #222;font-weight:bold">Device Status</div>
<div class="a" style="left:1015.0px;top:1654.5px;width:15.0px;height:15.0px;border-radius:50%;background:#0a8a1a"></div>
<div class="m" style="left:1038.0px;top:1654.0px;font-size:13.33px;line-height:12.308px;color:#359535;transform:scaleY(1.3);transform-origin:0 0;-webkit-text-stroke:0.3px #359535;">OPC UA [opc.tcp://10.42.100.43:55101]: Online</div>
<div class="a" style="left:1015.0px;top:1680.5px;width:15.0px;height:15.0px;border-radius:50%;background:#0a8a1a"></div>
<div class="m" style="left:1038.0px;top:1680.0px;font-size:13.33px;line-height:12.308px;color:#359535;transform:scaleY(1.3);transform-origin:0 0;-webkit-text-stroke:0.3px #359535;">1#F is single shuttle map</div>
<div class="a" style="left:1342.0px;top:1680.5px;width:15.0px;height:15.0px;border-radius:50%;background:#0a8a1a"></div>
<div class="m" style="left:1365.0px;top:1680.0px;font-size:13.33px;line-height:12.308px;color:#359535;transform:scaleY(1.3);transform-origin:0 0;-webkit-text-stroke:0.3px #359535;">2#F is single shuttle map</div>
<div class="a" style="left:1015.0px;top:1707.1px;width:15.0px;height:15.0px;border-radius:50%;background:#0a8a1a"></div>
<div class="m" style="left:1038.0px;top:1706.6px;font-size:13.33px;line-height:12.308px;color:#359535;transform:scaleY(1.3);transform-origin:0 0;-webkit-text-stroke:0.3px #359535;">3#F is single shuttle map</div>
<div class="a" style="left:1342.0px;top:1707.1px;width:15.0px;height:15.0px;border-radius:50%;background:#0a8a1a"></div>
<div class="m" style="left:1365.0px;top:1706.6px;font-size:13.33px;line-height:12.308px;color:#359535;transform:scaleY(1.3);transform-origin:0 0;-webkit-text-stroke:0.3px #359535;">4#F is single shuttle map</div>
<div class="a" style="left:1015.0px;top:1733.7px;width:15.0px;height:15.0px;border-radius:50%;background:#0a8a1a"></div>
<div class="m" style="left:1038.0px;top:1733.2px;font-size:13.33px;line-height:12.308px;color:#359535;transform:scaleY(1.3);transform-origin:0 0;-webkit-text-stroke:0.3px #359535;">5#F is single shuttle map</div>
<div class="a" style="left:1342.0px;top:1733.7px;width:15.0px;height:15.0px;border-radius:50%;background:#0a8a1a"></div>
<div class="m" style="left:1365.0px;top:1733.2px;font-size:13.33px;line-height:12.308px;color:#359535;transform:scaleY(1.3);transform-origin:0 0;-webkit-text-stroke:0.3px #359535;">6#F is single shuttle map</div>
<div class="a" style="left:1015.0px;top:1760.3px;width:15.0px;height:15.0px;border-radius:50%;background:#0a8a1a"></div>
<div class="m" style="left:1038.0px;top:1759.8px;font-size:13.33px;line-height:12.308px;color:#359535;transform:scaleY(1.3);transform-origin:0 0;-webkit-text-stroke:0.3px #359535;">7#F is single shuttle map</div>
<div class="a" style="left:1342.0px;top:1760.3px;width:15.0px;height:15.0px;border-radius:50%;background:#0a8a1a"></div>
<div class="m" style="left:1365.0px;top:1759.8px;font-size:13.33px;line-height:12.308px;color:#359535;transform:scaleY(1.3);transform-origin:0 0;-webkit-text-stroke:0.3px #359535;">8#F is single shuttle map</div>
<div class="a" style="left:1015.0px;top:1786.9px;width:15.0px;height:15.0px;border-radius:50%;background:#0a8a1a"></div>
<div class="m" style="left:1038.0px;top:1786.4px;font-size:13.33px;line-height:12.308px;color:#359535;transform:scaleY(1.3);transform-origin:0 0;-webkit-text-stroke:0.3px #359535;">9#F is single shuttle map</div>
<div class="a" style="left:1342.0px;top:1786.9px;width:15.0px;height:15.0px;border-radius:50%;background:#0a8a1a"></div>
<div class="m" style="left:1365.0px;top:1786.4px;font-size:13.33px;line-height:12.308px;color:#359535;transform:scaleY(1.3);transform-origin:0 0;-webkit-text-stroke:0.3px #359535;">10#F is single shuttle map</div>
<div class="a" style="left:1015.0px;top:1813.5px;width:15.0px;height:15.0px;border-radius:50%;background:#0a8a1a"></div>
<div class="m" style="left:1038.0px;top:1813.0px;font-size:13.33px;line-height:12.308px;color:#359535;transform:scaleY(1.3);transform-origin:0 0;-webkit-text-stroke:0.3px #359535;">11#F is single shuttle map</div>
<div class="a" style="left:1342.0px;top:1813.5px;width:15.0px;height:15.0px;border-radius:50%;background:#0a8a1a"></div>
<div class="m" style="left:1365.0px;top:1813.0px;font-size:13.33px;line-height:12.308px;color:#359535;transform:scaleY(1.3);transform-origin:0 0;-webkit-text-stroke:0.3px #359535;">12#F is single shuttle map</div>
<div class="a" style="left:1015.0px;top:1840.1px;width:15.0px;height:15.0px;border-radius:50%;background:#0a8a1a"></div>
<div class="m" style="left:1038.0px;top:1839.6px;font-size:13.33px;line-height:12.308px;color:#359535;transform:scaleY(1.3);transform-origin:0 0;-webkit-text-stroke:0.3px #359535;">13#F is single shuttle map</div>
<div class="a" style="left:1342.0px;top:1840.1px;width:15.0px;height:15.0px;border-radius:50%;background:#0a8a1a"></div>
<div class="m" style="left:1365.0px;top:1839.6px;font-size:13.33px;line-height:12.308px;color:#359535;transform:scaleY(1.3);transform-origin:0 0;-webkit-text-stroke:0.3px #359535;">14#F is single shuttle map</div>
<div class="a" style="left:1015.0px;top:1866.7px;width:15.0px;height:15.0px;border-radius:50%;background:#0a8a1a"></div>
<div class="m" style="left:1038.0px;top:1866.2px;font-size:13.33px;line-height:12.308px;color:#359535;transform:scaleY(1.3);transform-origin:0 0;-webkit-text-stroke:0.3px #359535;">1#shuttle: operation</div>
<div class="a" style="left:1342.0px;top:1866.7px;width:15.0px;height:15.0px;border-radius:50%;background:#0a8a1a"></div>
<div class="m" style="left:1365.0px;top:1866.2px;font-size:13.33px;line-height:12.308px;color:#359535;transform:scaleY(1.3);transform-origin:0 0;-webkit-text-stroke:0.3px #359535;">2#shuttle: idle</div>
<div class="a" style="left:1747.0px;top:674.0px;width:2.0px;height:1200.0px;background:#e6e6e6"></div>
<div class="a" style="left:1749.0px;top:674.0px;width:4.0px;height:1200.0px;background:#fcfcfc"></div>
<div class="a" style="left:1753.0px;top:697.0px;width:1316.0px;height:1.0px;background:#dadada"></div>
<div class="a" style="left:1752.0px;top:674.0px;width:69.5px;height:23.0px;background:#f0f0f0;border:1px solid #dadada;border-bottom:none"></div>
<div class="m" style="left:1758.8px;top:679.0px;font-size:13.33px;line-height:12.308px;color:#222;transform:scaleY(1.3);transform-origin:0 0;-webkit-text-stroke:0.3px #222;font-weight:bold">Shuttle</div>
<div class="a" style="left:1821.5px;top:674.0px;width:71.5px;height:23.0px;background:#f0f0f0;border:1px solid #dadada;border-bottom:none"></div>
<div class="m" style="left:1829.2px;top:679.0px;font-size:13.33px;line-height:12.308px;color:#222;transform:scaleY(1.3);transform-origin:0 0;-webkit-text-stroke:0.3px #222;font-weight:bold">1#F Map</div>
<div class="a" style="left:1893.0px;top:674.0px;width:72.0px;height:23.0px;background:#f0f0f0;border:1px solid #dadada;border-bottom:none"></div>
<div class="m" style="left:1901.0px;top:679.0px;font-size:13.33px;line-height:12.308px;color:#222;transform:scaleY(1.3);transform-origin:0 0;-webkit-text-stroke:0.3px #222;font-weight:bold">2#F Map</div>
<div class="a" style="left:1965.0px;top:674.0px;width:72.0px;height:23.0px;background:#f0f0f0;border:1px solid #dadada;border-bottom:none"></div>
<div class="m" style="left:1973.0px;top:679.0px;font-size:13.33px;line-height:12.308px;color:#222;transform:scaleY(1.3);transform-origin:0 0;-webkit-text-stroke:0.3px #222;font-weight:bold">3#F Map</div>
<div class="a" style="left:2037.0px;top:672.0px;width:73.0px;height:26.0px;background:#fff;border:1px solid #dadada;border-bottom:none"></div>
<div class="m" style="left:2045.5px;top:677.0px;font-size:13.33px;line-height:12.308px;color:#222;transform:scaleY(1.3);transform-origin:0 0;-webkit-text-stroke:0.3px #222;font-weight:bold">4#F Map</div>
<div class="a" style="left:2110.0px;top:674.0px;width:71.0px;height:23.0px;background:#f0f0f0;border:1px solid #dadada;border-bottom:none"></div>
<div class="m" style="left:2117.5px;top:679.0px;font-size:13.33px;line-height:12.308px;color:#222;transform:scaleY(1.3);transform-origin:0 0;-webkit-text-stroke:0.3px #222;font-weight:bold">5#F Map</div>
<div class="a" style="left:2181.0px;top:674.0px;width:72.6px;height:23.0px;background:#f0f0f0;border:1px solid #dadada;border-bottom:none"></div>
<div class="m" style="left:2189.3px;top:679.0px;font-size:13.33px;line-height:12.308px;color:#222;transform:scaleY(1.3);transform-origin:0 0;-webkit-text-stroke:0.3px #222;font-weight:bold">6#F Map</div>
<div class="a" style="left:2253.6px;top:674.0px;width:71.0px;height:23.0px;background:#f0f0f0;border:1px solid #dadada;border-bottom:none"></div>
<div class="m" style="left:2261.1px;top:679.0px;font-size:13.33px;line-height:12.308px;color:#222;transform:scaleY(1.3);transform-origin:0 0;-webkit-text-stroke:0.3px #222;font-weight:bold">7#F Map</div>
<div class="a" style="left:2324.6px;top:674.0px;width:71.9px;height:23.0px;background:#f0f0f0;border:1px solid #dadada;border-bottom:none"></div>
<div class="m" style="left:2332.6px;top:679.0px;font-size:13.33px;line-height:12.308px;color:#222;transform:scaleY(1.3);transform-origin:0 0;-webkit-text-stroke:0.3px #222;font-weight:bold">8#F Map</div>
<div class="a" style="left:2396.5px;top:674.0px;width:71.5px;height:23.0px;background:#f0f0f0;border:1px solid #dadada;border-bottom:none"></div>
<div class="m" style="left:2404.2px;top:679.0px;font-size:13.33px;line-height:12.308px;color:#222;transform:scaleY(1.3);transform-origin:0 0;-webkit-text-stroke:0.3px #222;font-weight:bold">9#F Map</div>
<div class="a" style="left:2468.0px;top:674.0px;width:82.0px;height:23.0px;background:#f0f0f0;border:1px solid #dadada;border-bottom:none"></div>
<div class="m" style="left:2477.0px;top:679.0px;font-size:13.33px;line-height:12.308px;color:#222;transform:scaleY(1.3);transform-origin:0 0;-webkit-text-stroke:0.3px #222;font-weight:bold">10#F Map</div>
<div class="a" style="left:2550.0px;top:674.0px;width:79.0px;height:23.0px;background:#f0f0f0;border:1px solid #dadada;border-bottom:none"></div>
<div class="m" style="left:2557.5px;top:679.0px;font-size:13.33px;line-height:12.308px;color:#222;transform:scaleY(1.3);transform-origin:0 0;-webkit-text-stroke:0.3px #222;font-weight:bold">11#F Map</div>
<div class="a" style="left:2629.0px;top:674.0px;width:79.0px;height:23.0px;background:#f0f0f0;border:1px solid #dadada;border-bottom:none"></div>
<div class="m" style="left:2636.5px;top:679.0px;font-size:13.33px;line-height:12.308px;color:#222;transform:scaleY(1.3);transform-origin:0 0;-webkit-text-stroke:0.3px #222;font-weight:bold">12#F Map</div>
<div class="a" style="left:2708.0px;top:674.0px;width:79.0px;height:23.0px;background:#f0f0f0;border:1px solid #dadada;border-bottom:none"></div>
<div class="m" style="left:2715.5px;top:679.0px;font-size:13.33px;line-height:12.308px;color:#222;transform:scaleY(1.3);transform-origin:0 0;-webkit-text-stroke:0.3px #222;font-weight:bold">13#F Map</div>
<div class="a" style="left:2787.0px;top:674.0px;width:76.6px;height:23.0px;background:#f0f0f0;border:1px solid #dadada;border-bottom:none"></div>
<div class="m" style="left:2793.3px;top:679.0px;font-size:13.33px;line-height:12.308px;color:#222;transform:scaleY(1.3);transform-origin:0 0;-webkit-text-stroke:0.3px #222;font-weight:bold">14#F Map</div>
<svg class="a" style="left:1802px;top:748px" width="501" height="634" viewBox="0 0 501.1 634.1"><rect x="1.0" y="1.0" width="33.27" height="33.27" fill="#a85500"/><rect x="34.3" y="1.0" width="33.27" height="33.27" fill="#a85500"/><rect x="67.5" y="1.0" width="33.27" height="33.27" fill="#a85500"/><rect x="100.8" y="1.0" width="33.27" height="33.27" fill="#f9f9f9"/><rect x="104.8" y="5.0" width="25.27" height="25.27" fill="#a6dc5a"/><rect x="134.1" y="1.0" width="33.27" height="33.27" fill="#f9f9f9"/><rect x="138.1" y="5.0" width="25.27" height="25.27" fill="#a6dc5a"/><rect x="167.4" y="1.0" width="33.27" height="33.27" fill="#f9f9f9"/><rect x="171.4" y="5.0" width="25.27" height="25.27" fill="#a6dc5a"/><rect x="200.6" y="1.0" width="33.27" height="33.27" fill="#f9f9f9"/><rect x="204.6" y="5.0" width="25.27" height="25.27" fill="#a6dc5a"/><rect x="233.9" y="1.0" width="33.27" height="33.27" fill="#f9f9f9"/><rect x="267.2" y="1.0" width="33.27" height="33.27" fill="#f9f9f9"/><rect x="300.4" y="1.0" width="33.27" height="33.27" fill="#a85500"/><rect x="333.7" y="1.0" width="33.27" height="33.27" fill="#a85500"/><rect x="367.0" y="1.0" width="33.27" height="33.27" fill="#a85500"/><rect x="400.2" y="1.0" width="33.27" height="33.27" fill="#a85500"/><rect x="433.5" y="1.0" width="33.27" height="33.27" fill="#f9f9f9"/><rect x="437.5" y="5.0" width="25.27" height="25.27" fill="#a6dc5a"/><rect x="466.8" y="1.0" width="33.27" height="33.27" fill="#f9f9f9"/><rect x="470.8" y="5.0" width="25.27" height="25.27" fill="#a6dc5a"/><rect x="1.0" y="34.3" width="33.27" height="33.27" fill="#a85500"/><rect x="34.3" y="34.3" width="33.27" height="33.27" fill="#a85500"/><rect x="67.5" y="34.3" width="33.27" height="33.27" fill="#a85500"/><rect x="100.8" y="34.3" width="33.27" height="33.27" fill="#f9f9f9"/><rect x="134.1" y="34.3" width="33.27" height="33.27" fill="#f9f9f9"/><rect x="167.4" y="34.3" width="33.27" height="33.27" fill="#f9f9f9"/><rect x="200.6" y="34.3" width="33.27" height="33.27" fill="#f9f9f9"/><rect x="233.9" y="34.3" width="33.27" height="33.27" fill="#f9f9f9"/><rect x="267.2" y="34.3" width="33.27" height="33.27" fill="#f9f9f9"/><rect x="300.4" y="34.3" width="33.27" height="33.27" fill="#a85500"/><rect x="333.7" y="34.3" width="33.27" height="33.27" fill="#a85500"/><rect x="367.0" y="34.3" width="33.27" height="33.27" fill="#a85500"/><rect x="400.2" y="34.3" width="33.27" height="33.27" fill="#a85500"/><rect x="433.5" y="34.3" width="33.27" height="33.27" fill="#f9f9f9"/><rect x="466.8" y="34.3" width="33.27" height="33.27" fill="#f9f9f9"/><rect x="1.0" y="67.5" width="33.27" height="33.27" fill="#a85500"/><rect x="34.3" y="67.5" width="33.27" height="33.27" fill="#a85500"/><rect x="67.5" y="67.5" width="33.27" height="33.27" fill="#a85500"/><rect x="100.8" y="67.5" width="33.27" height="33.27" fill="#f9f9f9"/><rect x="134.1" y="67.5" width="33.27" height="33.27" fill="#f9f9f9"/><rect x="167.4" y="67.5" width="33.27" height="33.27" fill="#f9f9f9"/><rect x="200.6" y="67.5" width="33.27" height="33.27" fill="#f9f9f9"/><rect x="233.9" y="67.5" width="33.27" height="33.27" fill="#f9f9f9"/><rect x="267.2" y="67.5" width="33.27" height="33.27" fill="#f9f9f9"/><rect x="300.4" y="67.5" width="33.27" height="33.27" fill="#a85500"/><rect x="333.7" y="67.5" width="33.27" height="33.27" fill="#a85500"/><rect x="367.0" y="67.5" width="33.27" height="33.27" fill="#a85500"/><rect x="400.2" y="67.5" width="33.27" height="33.27" fill="#a85500"/><rect x="433.5" y="67.5" width="33.27" height="33.27" fill="#f9f9f9"/><rect x="466.8" y="67.5" width="33.27" height="33.27" fill="#f9f9f9"/><rect x="1.0" y="100.8" width="33.27" height="33.27" fill="#f9f9f9"/><rect x="5.0" y="104.8" width="25.27" height="25.27" fill="#a6dc5a"/><rect x="34.3" y="100.8" width="33.27" height="33.27" fill="#f9f9f9"/><rect x="67.5" y="100.8" width="33.27" height="33.27" fill="#f9f9f9"/><rect x="71.5" y="104.8" width="25.27" height="25.27" fill="#a6dc5a"/><rect x="100.8" y="100.8" width="33.27" height="33.27" fill="#f9f9f9"/><rect x="134.1" y="100.8" width="33.27" height="33.27" fill="#f9f9f9"/><rect x="167.4" y="100.8" width="33.27" height="33.27" fill="#f9f9f9"/><rect x="200.6" y="100.8" width="33.27" height="33.27" fill="#f9f9f9"/><rect x="233.9" y="100.8" width="33.27" height="33.27" fill="#f9f9f9"/><rect x="267.2" y="100.8" width="33.27" height="33.27" fill="#f9f9f9"/><rect x="300.4" y="100.8" width="33.27" height="33.27" fill="#f9f9f9"/><rect x="304.4" y="104.8" width="25.27" height="25.27" fill="#a6dc5a"/><rect x="333.7" y="100.8" width="33.27" height="33.27" fill="#f9f9f9"/><rect x="367.0" y="100.8" width="33.27" height="33.27" fill="#f9f9f9"/><rect x="371.0" y="104.8" width="25.27" height="25.27" fill="#a6dc5a"/><rect x="400.2" y="100.8" width="33.27" height="33.27" fill="#f9f9f9"/><rect x="404.2" y="104.8" width="25.27" height="25.27" fill="#a6dc5a"/><rect x="433.5" y="100.8" width="33.27" height="33.27" fill="#f9f9f9"/><rect x="466.8" y="100.8" width="33.27" height="33.27" fill="#f9f9f9"/><rect x="1.0" y="134.1" width="33.27" height="33.27" fill="#98c8f8"/><rect x="34.3" y="134.1" width="33.27" height="33.27" fill="#98c8f8"/><rect x="67.5" y="134.1" width="33.27" height="33.27" fill="#98c8f8"/><rect x="100.8" y="134.1" width="33.27" height="33.27" fill="#98c8f8"/><rect x="134.1" y="134.1" width="33.27" height="33.27" fill="#98c8f8"/><rect x="167.4" y="134.1" width="33.27" height="33.27" fill="#98c8f8"/><rect x="200.6" y="134.1" width="33.27" height="33.27" fill="#98c8f8"/><rect x="233.9" y="134.1" width="33.27" height="33.27" fill="#98c8f8"/><rect x="267.2" y="134.1" width="33.27" height="33.27" fill="#98c8f8"/><rect x="300.4" y="134.1" width="33.27" height="33.27" fill="#98c8f8"/><rect x="333.7" y="134.1" width="33.27" height="33.27" fill="#98c8f8"/><rect x="367.0" y="134.1" width="33.27" height="33.27" fill="#98c8f8"/><rect x="400.2" y="134.1" width="33.27" height="33.27" fill="#98c8f8"/><rect x="433.5" y="134.1" width="33.27" height="33.27" fill="#98c8f8"/><rect x="466.8" y="134.1" width="33.27" height="33.27" fill="#98c8f8"/><rect x="1.0" y="167.4" width="33.27" height="33.27" fill="#f9f9f9"/><rect x="5.0" y="171.4" width="25.27" height="25.27" fill="#a6dc5a"/><rect x="34.3" y="167.4" width="33.27" height="33.27" fill="#98c8f8"/><rect x="67.5" y="167.4" width="33.27" height="33.27" fill="#f9f9f9"/><rect x="100.8" y="167.4" width="33.27" height="33.27" fill="#f9f9f9"/><rect x="134.1" y="167.4" width="33.27" height="33.27" fill="#f9f9f9"/><rect x="167.4" y="167.4" width="33.27" height="33.27" fill="#f9f9f9"/><rect x="200.6" y="167.4" width="33.27" height="33.27" fill="#f9f9f9"/><rect x="233.9" y="167.4" width="33.27" height="33.27" fill="#f9f9f9"/><rect x="267.2" y="167.4" width="33.27" height="33.27" fill="#f9f9f9"/><rect x="300.4" y="167.4" width="33.27" height="33.27" fill="#f9f9f9"/><rect x="304.4" y="171.4" width="25.27" height="25.27" fill="#a6dc5a"/><rect x="333.7" y="167.4" width="33.27" height="33.27" fill="#f9f9f9"/><rect x="337.7" y="171.4" width="25.27" height="25.27" fill="#a6dc5a"/><rect x="367.0" y="167.4" width="33.27" height="33.27" fill="#f9f9f9"/><rect x="400.2" y="167.4" width="33.27" height="33.27" fill="#f9f9f9"/><rect x="404.2" y="171.4" width="25.27" height="25.27" fill="#a6dc5a"/><rect x="433.5" y="167.4" width="33.27" height="33.27" fill="#f9f9f9"/><rect x="466.8" y="167.4" width="33.27" height="33.27" fill="#f9f9f9"/><rect x="1.0" y="200.6" width="33.27" height="33.27" fill="#f9f9f9"/><rect x="5.0" y="204.6" width="25.27" height="25.27" fill="#a6dc5a"/><rect x="34.3" y="200.6" width="33.27" height="33.27" fill="#98c8f8"/><rect x="67.5" y="200.6" width="33.27" height="33.27" fill="#f9f9f9"/><rect x="100.8" y="200.6" width="33.27" height="33.27" fill="#f9f9f9"/><rect x="134.1" y="200.6" width="33.27" height="33.27" fill="#f9f9f9"/><rect x="167.4" y="200.6" width="33.27" height="33.27" fill="#f9f9f9"/><rect x="200.6" y="200.6" width="33.27" height="33.27" fill="#f9f9f9"/><rect x="233.9" y="200.6" width="33.27" height="33.27" fill="#f9f9f9"/><rect x="267.2" y="200.6" width="33.27" height="33.27" fill="#f9f9f9"/><rect x="300.4" y="200.6" width="33.27" height="33.27" fill="#f9f9f9"/><rect x="304.4" y="204.6" width="25.27" height="25.27" fill="#a6dc5a"/><rect x="333.7" y="200.6" width="33.27" height="33.27" fill="#f9f9f9"/><rect x="337.7" y="204.6" width="25.27" height="25.27" fill="#a6dc5a"/><rect x="367.0" y="200.6" width="33.27" height="33.27" fill="#f9f9f9"/><rect x="371.0" y="204.6" width="25.27" height="25.27" fill="#a6dc5a"/><rect x="400.2" y="200.6" width="33.27" height="33.27" fill="#f9f9f9"/><rect x="404.2" y="204.6" width="25.27" height="25.27" fill="#a6dc5a"/><rect x="433.5" y="200.6" width="33.27" height="33.27" fill="#f9f9f9"/><rect x="466.8" y="200.6" width="33.27" height="33.27" fill="#f9f9f9"/><rect x="1.0" y="233.9" width="33.27" height="33.27" fill="#f9f9f9"/><rect x="34.3" y="233.9" width="33.27" height="33.27" fill="#98c8f8"/><rect x="67.5" y="233.9" width="33.27" height="33.27" fill="#f9f9f9"/><rect x="71.5" y="237.9" width="25.27" height="25.27" fill="#a6dc5a"/><rect x="100.8" y="233.9" width="33.27" height="33.27" fill="#f9f9f9"/><rect x="104.8" y="237.9" width="25.27" height="25.27" fill="#a6dc5a"/><rect x="134.1" y="233.9" width="33.27" height="33.27" fill="#f9f9f9"/><rect x="138.1" y="237.9" width="25.27" height="25.27" fill="#a6dc5a"/><rect x="167.4" y="233.9" width="33.27" height="33.27" fill="#f9f9f9"/><rect x="171.4" y="237.9" width="25.27" height="25.27" fill="#a6dc5a"/><rect x="200.6" y="233.9" width="33.27" height="33.27" fill="#f9f9f9"/><rect x="204.6" y="237.9" width="25.27" height="25.27" fill="#a6dc5a"/><rect x="233.9" y="233.9" width="33.27" height="33.27" fill="#f9f9f9"/><rect x="237.9" y="237.9" width="25.27" height="25.27" fill="#a6dc5a"/><rect x="267.2" y="233.9" width="33.27" height="33.27" fill="#f9f9f9"/><rect x="271.2" y="237.9" width="25.27" height="25.27" fill="#a6dc5a"/><rect x="300.4" y="233.9" width="33.27" height="33.27" fill="#f9f9f9"/><rect x="304.4" y="237.9" width="25.27" height="25.27" fill="#a6dc5a"/><rect x="333.7" y="233.9" width="33.27" height="33.27" fill="#f9f9f9"/><rect x="337.7" y="237.9" width="25.27" height="25.27" fill="#a6dc5a"/><rect x="367.0" y="233.9" width="33.27" height="33.27" fill="#f9f9f9"/><rect x="371.0" y="237.9" width="25.27" height="25.27" fill="#a6dc5a"/><rect x="400.2" y="233.9" width="33.27" height="33.27" fill="#f9f9f9"/><rect x="404.2" y="237.9" width="25.27" height="25.27" fill="#a6dc5a"/><rect x="433.5" y="233.9" width="33.27" height="33.27" fill="#f9f9f9"/><rect x="437.5" y="237.9" width="25.27" height="25.27" fill="#a6dc5a"/><rect x="466.8" y="233.9" width="33.27" height="33.27" fill="#f9f9f9"/><rect x="470.8" y="237.9" width="25.27" height="25.27" fill="#a6dc5a"/><rect x="1.0" y="267.2" width="33.27" height="33.27" fill="#98c8f8"/><rect x="34.3" y="267.2" width="33.27" height="33.27" fill="#98c8f8"/><rect x="67.5" y="267.2" width="33.27" height="33.27" fill="#98c8f8"/><rect x="100.8" y="267.2" width="33.27" height="33.27" fill="#98c8f8"/><rect x="134.1" y="267.2" width="33.27" height="33.27" fill="#98c8f8"/><rect x="167.4" y="267.2" width="33.27" height="33.27" fill="#98c8f8"/><rect x="200.6" y="267.2" width="33.27" height="33.27" fill="#98c8f8"/><rect x="233.9" y="267.2" width="33.27" height="33.27" fill="#98c8f8"/><rect x="267.2" y="267.2" width="33.27" height="33.27" fill="#98c8f8"/><rect x="300.4" y="267.2" width="33.27" height="33.27" fill="#98c8f8"/><rect x="333.7" y="267.2" width="33.27" height="33.27" fill="#98c8f8"/><rect x="367.0" y="267.2" width="33.27" height="33.27" fill="#98c8f8"/><rect x="400.2" y="267.2" width="33.27" height="33.27" fill="#98c8f8"/><rect x="433.5" y="267.2" width="33.27" height="33.27" fill="#98c8f8"/><rect x="466.8" y="267.2" width="33.27" height="33.27" fill="#98c8f8"/><rect x="1.0" y="300.4" width="33.27" height="33.27" fill="#f9f9f9"/><rect x="34.3" y="300.4" width="33.27" height="33.27" fill="#98c8f8"/><rect x="67.5" y="300.4" width="33.27" height="33.27" fill="#f9f9f9"/><rect x="100.8" y="300.4" width="33.27" height="33.27" fill="#f9f9f9"/><rect x="134.1" y="300.4" width="33.27" height="33.27" fill="#f9f9f9"/><rect x="138.1" y="304.4" width="25.27" height="25.27" fill="#a6dc5a"/><rect x="167.4" y="300.4" width="33.27" height="33.27" fill="#f9f9f9"/><rect x="200.6" y="300.4" width="33.27" height="33.27" fill="#f9f9f9"/><rect x="233.9" y="300.4" width="33.27" height="33.27" fill="#f9f9f9"/><rect x="267.2" y="300.4" width="33.27" height="33.27" fill="#f9f9f9"/><rect x="300.4" y="300.4" width="33.27" height="33.27" fill="#f9f9f9"/><rect x="333.7" y="300.4" width="33.27" height="33.27" fill="#f9f9f9"/><rect x="367.0" y="300.4" width="33.27" height="33.27" fill="#f9f9f9"/><rect x="400.2" y="300.4" width="33.27" height="33.27" fill="#f9f9f9"/><rect x="433.5" y="300.4" width="33.27" height="33.27" fill="#f9f9f9"/><rect x="466.8" y="300.4" width="33.27" height="33.27" fill="#f9f9f9"/><rect x="1.0" y="333.7" width="33.27" height="33.27" fill="#f9f9f9"/><rect x="5.0" y="337.7" width="25.27" height="25.27" fill="#a6dc5a"/><rect x="34.3" y="333.7" width="33.27" height="33.27" fill="#98c8f8"/><rect x="67.5" y="333.7" width="33.27" height="33.27" fill="#f9f9f9"/><rect x="100.8" y="333.7" width="33.27" height="33.27" fill="#f9f9f9"/><rect x="134.1" y="333.7" width="33.27" height="33.27" fill="#f9f9f9"/><rect x="138.1" y="337.7" width="25.27" height="25.27" fill="#a6dc5a"/><rect x="167.4" y="333.7" width="33.27" height="33.27" fill="#f9f9f9"/><rect x="200.6" y="333.7" width="33.27" height="33.27" fill="#f9f9f9"/><rect x="204.6" y="337.7" width="25.27" height="25.27" fill="#a6dc5a"/><rect x="233.9" y="333.7" width="33.27" height="33.27" fill="#f9f9f9"/><rect x="267.2" y="333.7" width="33.27" height="33.27" fill="#f9f9f9"/><rect x="300.4" y="333.7" width="33.27" height="33.27" fill="#f9f9f9"/><rect x="333.7" y="333.7" width="33.27" height="33.27" fill="#f9f9f9"/><rect x="367.0" y="333.7" width="33.27" height="33.27" fill="#f9f9f9"/><rect x="400.2" y="333.7" width="33.27" height="33.27" fill="#f9f9f9"/><rect x="433.5" y="333.7" width="33.27" height="33.27" fill="#f9f9f9"/><rect x="466.8" y="333.7" width="33.27" height="33.27" fill="#f9f9f9"/><rect x="1.0" y="367.0" width="33.27" height="33.27" fill="#f9f9f9"/><rect x="5.0" y="371.0" width="25.27" height="25.27" fill="#a6dc5a"/><rect x="34.3" y="367.0" width="33.27" height="33.27" fill="#98c8f8"/><rect x="67.5" y="367.0" width="33.27" height="33.27" fill="#f9f9f9"/><rect x="71.5" y="371.0" width="25.27" height="25.27" fill="#a6dc5a"/><rect x="100.8" y="367.0" width="33.27" height="33.27" fill="#f9f9f9"/><rect x="104.8" y="371.0" width="25.27" height="25.27" fill="#a6dc5a"/><rect x="134.1" y="367.0" width="33.27" height="33.27" fill="#f9f9f9"/><rect x="138.1" y="371.0" width="25.27" height="25.27" fill="#a6dc5a"/><rect x="167.4" y="367.0" width="33.27" height="33.27" fill="#f9f9f9"/><rect x="171.4" y="371.0" width="25.27" height="25.27" fill="#a6dc5a"/><rect x="200.6" y="367.0" width="33.27" height="33.27" fill="#f9f9f9"/><rect x="204.6" y="371.0" width="25.27" height="25.27" fill="#a6dc5a"/><rect x="233.9" y="367.0" width="33.27" height="33.27" fill="#f9f9f9"/><rect x="237.9" y="371.0" width="25.27" height="25.27" fill="#a6dc5a"/><rect x="267.2" y="367.0" width="33.27" height="33.27" fill="#f9f9f9"/><rect x="271.2" y="371.0" width="25.27" height="25.27" fill="#a6dc5a"/><rect x="300.4" y="367.0" width="33.27" height="33.27" fill="#f9f9f9"/><rect x="304.4" y="371.0" width="25.27" height="25.27" fill="#a6dc5a"/><rect x="333.7" y="367.0" width="33.27" height="33.27" fill="#f9f9f9"/><rect x="337.7" y="371.0" width="25.27" height="25.27" fill="#a6dc5a"/><rect x="367.0" y="367.0" width="33.27" height="33.27" fill="#f9f9f9"/><rect x="371.0" y="371.0" width="25.27" height="25.27" fill="#a6dc5a"/><rect x="400.2" y="367.0" width="33.27" height="33.27" fill="#f9f9f9"/><rect x="404.2" y="371.0" width="25.27" height="25.27" fill="#a6dc5a"/><rect x="433.5" y="367.0" width="33.27" height="33.27" fill="#f9f9f9"/><rect x="437.5" y="371.0" width="25.27" height="25.27" fill="#a6dc5a"/><rect x="466.8" y="367.0" width="33.27" height="33.27" fill="#f9f9f9"/><rect x="470.8" y="371.0" width="25.27" height="25.27" fill="#a6dc5a"/><rect x="1.0" y="400.2" width="33.27" height="33.27" fill="#98c8f8"/><rect x="34.3" y="400.2" width="33.27" height="33.27" fill="#98c8f8"/><rect x="67.5" y="400.2" width="33.27" height="33.27" fill="#98c8f8"/><rect x="100.8" y="400.2" width="33.27" height="33.27" fill="#98c8f8"/><rect x="134.1" y="400.2" width="33.27" height="33.27" fill="#98c8f8"/><rect x="167.4" y="400.2" width="33.27" height="33.27" fill="#98c8f8"/><rect x="200.6" y="400.2" width="33.27" height="33.27" fill="#98c8f8"/><rect x="233.9" y="400.2" width="33.27" height="33.27" fill="#98c8f8"/><rect x="267.2" y="400.2" width="33.27" height="33.27" fill="#98c8f8"/><rect x="300.4" y="400.2" width="33.27" height="33.27" fill="#98c8f8"/><rect x="333.7" y="400.2" width="33.27" height="33.27" fill="#98c8f8"/><rect x="367.0" y="400.2" width="33.27" height="33.27" fill="#98c8f8"/><rect x="400.2" y="400.2" width="33.27" height="33.27" fill="#98c8f8"/><rect x="433.5" y="400.2" width="33.27" height="33.27" fill="#98c8f8"/><rect x="466.8" y="400.2" width="33.27" height="33.27" fill="#98c8f8"/><rect x="1.0" y="433.5" width="33.27" height="33.27" fill="#f9f9f9"/><rect x="5.0" y="437.5" width="25.27" height="25.27" fill="#a6dc5a"/><rect x="34.3" y="433.5" width="33.27" height="33.27" fill="#f9f9f9"/><rect x="67.5" y="433.5" width="33.27" height="33.27" fill="#f9f9f9"/><rect x="71.5" y="437.5" width="25.27" height="25.27" fill="#a6dc5a"/><rect x="100.8" y="433.5" width="33.27" height="33.27" fill="#f9f9f9"/><rect x="134.1" y="433.5" width="33.27" height="33.27" fill="#f9f9f9"/><rect x="167.4" y="433.5" width="33.27" height="33.27" fill="#f9f9f9"/><rect x="171.4" y="437.5" width="25.27" height="25.27" fill="#a6dc5a"/><rect x="200.6" y="433.5" width="33.27" height="33.27" fill="#f9f9f9"/><rect x="204.6" y="437.5" width="25.27" height="25.27" fill="#a6dc5a"/><rect x="233.9" y="433.5" width="33.27" height="33.27" fill="#f9f9f9"/><rect x="237.9" y="437.5" width="25.27" height="25.27" fill="#a6dc5a"/><rect x="267.2" y="433.5" width="33.27" height="33.27" fill="#f9f9f9"/><rect x="300.4" y="433.5" width="33.27" height="33.27" fill="#f9f9f9"/><rect x="304.4" y="437.5" width="25.27" height="25.27" fill="#a6dc5a"/><rect x="333.7" y="433.5" width="33.27" height="33.27" fill="#f9f9f9"/><rect x="367.0" y="433.5" width="33.27" height="33.27" fill="#f9f9f9"/><rect x="371.0" y="437.5" width="25.27" height="25.27" fill="#a6dc5a"/><rect x="400.2" y="433.5" width="33.27" height="33.27" fill="#f9f9f9"/><rect x="404.2" y="437.5" width="25.27" height="25.27" fill="#a6dc5a"/><rect x="433.5" y="433.5" width="33.27" height="33.27" fill="#f9f9f9"/><rect x="437.5" y="437.5" width="25.27" height="25.27" fill="#a6dc5a"/><rect x="466.8" y="433.5" width="33.27" height="33.27" fill="#98c8f8"/><rect x="1.0" y="466.8" width="33.27" height="33.27" fill="#a85500"/><rect x="34.3" y="466.8" width="33.27" height="33.27" fill="#a85500"/><rect x="67.5" y="466.8" width="33.27" height="33.27" fill="#a85500"/><rect x="100.8" y="466.8" width="33.27" height="33.27" fill="#a85500"/><rect x="134.1" y="466.8" width="33.27" height="33.27" fill="#a85500"/><rect x="167.4" y="466.8" width="33.27" height="33.27" fill="#a85500"/><rect x="200.6" y="466.8" width="33.27" height="33.27" fill="#a85500"/><rect x="233.9" y="466.8" width="33.27" height="33.27" fill="#a85500"/><rect x="267.2" y="466.8" width="33.27" height="33.27" fill="#a85500"/><rect x="300.4" y="466.8" width="33.27" height="33.27" fill="#a85500"/><rect x="333.7" y="466.8" width="33.27" height="33.27" fill="#a85500"/><rect x="367.0" y="466.8" width="33.27" height="33.27" fill="#a85500"/><rect x="400.2" y="466.8" width="33.27" height="33.27" fill="#a85500"/><rect x="433.5" y="466.8" width="33.27" height="33.27" fill="#a85500"/><rect x="466.8" y="466.8" width="33.27" height="33.27" fill="#98c8f8"/><rect x="1.0" y="500.1" width="33.27" height="33.27" fill="#a85500"/><rect x="34.3" y="500.1" width="33.27" height="33.27" fill="#a85500"/><rect x="67.5" y="500.1" width="33.27" height="33.27" fill="#a85500"/><rect x="100.8" y="500.1" width="33.27" height="33.27" fill="#a85500"/><rect x="134.1" y="500.1" width="33.27" height="33.27" fill="#a85500"/><rect x="167.4" y="500.1" width="33.27" height="33.27" fill="#a85500"/><rect x="200.6" y="500.1" width="33.27" height="33.27" fill="#a85500"/><rect x="233.9" y="500.1" width="33.27" height="33.27" fill="#a85500"/><rect x="267.2" y="500.1" width="33.27" height="33.27" fill="#a85500"/><rect x="300.4" y="500.1" width="33.27" height="33.27" fill="#a85500"/><rect x="333.7" y="500.1" width="33.27" height="33.27" fill="#a85500"/><rect x="367.0" y="500.1" width="33.27" height="33.27" fill="#a85500"/><rect x="400.2" y="500.1" width="33.27" height="33.27" fill="#a85500"/><rect x="433.5" y="500.1" width="33.27" height="33.27" fill="#a85500"/><rect x="466.8" y="500.1" width="33.27" height="33.27" fill="#98c8f8"/><rect x="1.0" y="533.3" width="33.27" height="33.27" fill="#a85500"/><rect x="34.3" y="533.3" width="33.27" height="33.27" fill="#a85500"/><rect x="67.5" y="533.3" width="33.27" height="33.27" fill="#a85500"/><rect x="100.8" y="533.3" width="33.27" height="33.27" fill="#a85500"/><rect x="134.1" y="533.3" width="33.27" height="33.27" fill="#a85500"/><rect x="167.4" y="533.3" width="33.27" height="33.27" fill="#a85500"/><rect x="200.6" y="533.3" width="33.27" height="33.27" fill="#a85500"/><rect x="233.9" y="533.3" width="33.27" height="33.27" fill="#a85500"/><rect x="267.2" y="533.3" width="33.27" height="33.27" fill="#a85500"/><rect x="300.4" y="533.3" width="33.27" height="33.27" fill="#a85500"/><rect x="333.7" y="533.3" width="33.27" height="33.27" fill="#a85500"/><rect x="367.0" y="533.3" width="33.27" height="33.27" fill="#a85500"/><rect x="400.2" y="533.3" width="33.27" height="33.27" fill="#fde2bb"/><rect x="433.5" y="533.3" width="33.27" height="33.27" fill="#fde2bb"/><rect x="466.8" y="533.3" width="33.27" height="33.27" fill="#98c8f8"/><rect x="1.0" y="566.6" width="33.27" height="33.27" fill="#a85500"/><rect x="34.3" y="566.6" width="33.27" height="33.27" fill="#a85500"/><rect x="67.5" y="566.6" width="33.27" height="33.27" fill="#a85500"/><rect x="100.8" y="566.6" width="33.27" height="33.27" fill="#a85500"/><rect x="134.1" y="566.6" width="33.27" height="33.27" fill="#a85500"/><rect x="167.4" y="566.6" width="33.27" height="33.27" fill="#a85500"/><rect x="200.6" y="566.6" width="33.27" height="33.27" fill="#a85500"/><rect x="233.9" y="566.6" width="33.27" height="33.27" fill="#a85500"/><rect x="267.2" y="566.6" width="33.27" height="33.27" fill="#a85500"/><rect x="300.4" y="566.6" width="33.27" height="33.27" fill="#a85500"/><rect x="333.7" y="566.6" width="33.27" height="33.27" fill="#a85500"/><rect x="367.0" y="566.6" width="33.27" height="33.27" fill="#a85500"/><rect x="400.2" y="566.6" width="33.27" height="33.27" fill="#98c8f8"/><rect x="433.5" y="566.6" width="33.27" height="33.27" fill="#98c8f8"/><rect x="466.8" y="566.6" width="33.27" height="33.27" fill="#98c8f8"/><rect x="1.0" y="599.9" width="33.27" height="33.27" fill="#a85500"/><rect x="34.3" y="599.9" width="33.27" height="33.27" fill="#a85500"/><rect x="67.5" y="599.9" width="33.27" height="33.27" fill="#a85500"/><rect x="100.8" y="599.9" width="33.27" height="33.27" fill="#a85500"/><rect x="134.1" y="599.9" width="33.27" height="33.27" fill="#a85500"/><rect x="167.4" y="599.9" width="33.27" height="33.27" fill="#a85500"/><rect x="200.6" y="599.9" width="33.27" height="33.27" fill="#a85500"/><rect x="233.9" y="599.9" width="33.27" height="33.27" fill="#a85500"/><rect x="267.2" y="599.9" width="33.27" height="33.27" fill="#a85500"/><rect x="300.4" y="599.9" width="33.27" height="33.27" fill="#a85500"/><rect x="333.7" y="599.9" width="33.27" height="33.27" fill="#a85500"/><rect x="367.0" y="599.9" width="33.27" height="33.27" fill="#a85500"/><rect x="400.2" y="599.9" width="33.27" height="33.27" fill="#dc9200"/><text x="406.2" y="616.9" font-family="Liberation Sans" font-size="15" fill="#333">3</text><rect x="433.5" y="599.9" width="33.27" height="33.27" fill="#fde2bb"/><rect x="466.8" y="599.9" width="33.27" height="33.27" fill="#fde2bb"/><rect x="0.0" y="0" width="1.3" height="633.6" fill="#8a8a8a"/><rect x="33.3" y="0" width="1.3" height="633.6" fill="#8a8a8a"/><rect x="66.5" y="0" width="1.3" height="633.6" fill="#8a8a8a"/><rect x="99.8" y="0" width="1.3" height="633.6" fill="#8a8a8a"/><rect x="133.1" y="0" width="1.3" height="633.6" fill="#8a8a8a"/><rect x="166.4" y="0" width="1.3" height="633.6" fill="#8a8a8a"/><rect x="199.6" y="0" width="1.3" height="633.6" fill="#8a8a8a"/><rect x="232.9" y="0" width="1.3" height="633.6" fill="#8a8a8a"/><rect x="266.2" y="0" width="1.3" height="633.6" fill="#8a8a8a"/><rect x="299.4" y="0" width="1.3" height="633.6" fill="#8a8a8a"/><rect x="332.7" y="0" width="1.3" height="633.6" fill="#8a8a8a"/><rect x="366.0" y="0" width="1.3" height="633.6" fill="#8a8a8a"/><rect x="399.2" y="0" width="1.3" height="633.6" fill="#8a8a8a"/><rect x="432.5" y="0" width="1.3" height="633.6" fill="#8a8a8a"/><rect x="465.8" y="0" width="1.3" height="633.6" fill="#8a8a8a"/><rect x="499.1" y="0" width="1.3" height="633.6" fill="#8a8a8a"/><rect x="0" y="0.0" width="500.6" height="1.3" fill="#8a8a8a"/><rect x="0" y="33.3" width="500.6" height="1.3" fill="#8a8a8a"/><rect x="0" y="66.5" width="500.6" height="1.3" fill="#8a8a8a"/><rect x="0" y="99.8" width="500.6" height="1.3" fill="#8a8a8a"/><rect x="0" y="133.1" width="500.6" height="1.3" fill="#8a8a8a"/><rect x="0" y="166.4" width="500.6" height="1.3" fill="#8a8a8a"/><rect x="0" y="199.6" width="500.6" height="1.3" fill="#8a8a8a"/><rect x="0" y="232.9" width="500.6" height="1.3" fill="#8a8a8a"/><rect x="0" y="266.2" width="500.6" height="1.3" fill="#8a8a8a"/><rect x="0" y="299.4" width="500.6" height="1.3" fill="#8a8a8a"/><rect x="0" y="332.7" width="500.6" height="1.3" fill="#8a8a8a"/><rect x="0" y="366.0" width="500.6" height="1.3" fill="#8a8a8a"/><rect x="0" y="399.2" width="500.6" height="1.3" fill="#8a8a8a"/><rect x="0" y="432.5" width="500.6" height="1.3" fill="#8a8a8a"/><rect x="0" y="465.8" width="500.6" height="1.3" fill="#8a8a8a"/><rect x="0" y="499.1" width="500.6" height="1.3" fill="#8a8a8a"/><rect x="0" y="532.3" width="500.6" height="1.3" fill="#8a8a8a"/><rect x="0" y="565.6" width="500.6" height="1.3" fill="#8a8a8a"/><rect x="0" y="598.9" width="500.6" height="1.3" fill="#8a8a8a"/><rect x="0" y="632.1" width="500.6" height="1.3" fill="#8a8a8a"/></svg>
<div class="a" style="left:2502.0px;top:750.0px;width:147.0px;height:31.0px;background:#e1e1e1;border:1.5px solid #adadad"></div>
<div class="m" style="left:2546.0px;top:758.0px;font-size:13.33px;line-height:12.308px;color:#359535;transform:scaleY(1.3);transform-origin:0 0;-webkit-text-stroke:0.3px #359535;">Enabled</div>
<div class="m" style="left:2499.0px;top:842.0px;font-size:13.33px;line-height:12.308px;color:#359535;transform:scaleY(1.3);transform-origin:0 0;-webkit-text-stroke:0.3px #359535;">Status is normal</div>
<div class="m" style="left:2499.0px;top:884.0px;font-size:13.33px;line-height:12.308px;color:#359535;transform:scaleY(1.3);transform-origin:0 0;-webkit-text-stroke:0.3px #359535;">Currently, this floor is a single shuttle map</div>
<div class="a" style="left:2504.0px;top:935.7px;width:18.0px;height:18.0px;background:#f9f9f9"></div>
<div class="m" style="left:2529.0px;top:936.7px;font-size:13.33px;line-height:12.308px;color:#222;transform:scaleY(1.3);transform-origin:0 0;-webkit-text-stroke:0.3px #222;">Location</div>
<div class="a" style="left:2504.0px;top:962.2px;width:18.0px;height:18.0px;background:#99c9f8"></div>
<div class="m" style="left:2529.0px;top:963.2px;font-size:13.33px;line-height:12.308px;color:#222;transform:scaleY(1.3);transform-origin:0 0;-webkit-text-stroke:0.3px #222;">Channel</div>
<div class="a" style="left:2504.0px;top:988.8px;width:18.0px;height:18.0px;background:#f9b6c4"></div>
<div class="m" style="left:2529.0px;top:989.8px;font-size:13.33px;line-height:12.308px;color:#222;transform:scaleY(1.3);transform-origin:0 0;-webkit-text-stroke:0.3px #222;">Elevator</div>
<div class="a" style="left:2504.0px;top:1015.4px;width:18.0px;height:18.0px;background:#6f90d6"></div>
<div class="m" style="left:2529.0px;top:1016.4px;font-size:13.33px;line-height:12.308px;color:#222;transform:scaleY(1.3);transform-origin:0 0;-webkit-text-stroke:0.3px #222;">Wait location</div>
<div class="a" style="left:2504.0px;top:1041.9px;width:18.0px;height:18.0px;background:#fde0b8"></div>
<div class="m" style="left:2529.0px;top:1042.9px;font-size:13.33px;line-height:12.308px;color:#222;transform:scaleY(1.3);transform-origin:0 0;-webkit-text-stroke:0.3px #222;">Charging location</div>
<div class="a" style="left:2504.0px;top:1068.5px;width:18.0px;height:18.0px;background:#a65400"></div>
<div class="m" style="left:2529.0px;top:1069.5px;font-size:13.33px;line-height:12.308px;color:#222;transform:scaleY(1.3);transform-origin:0 0;-webkit-text-stroke:0.3px #222;">Not on the map</div>
<div class="a" style="left:2504.0px;top:1095.0px;width:18.0px;height:18.0px;background:#2b2d6b"></div>
<div class="m" style="left:2529.0px;top:1096.0px;font-size:13.33px;line-height:12.308px;color:#222;transform:scaleY(1.3);transform-origin:0 0;-webkit-text-stroke:0.3px #222;">Shield point</div>
<div class="a" style="left:2504.0px;top:1121.5px;width:18.0px;height:18.0px;background:#a6dc5a"></div>
<div class="m" style="left:2529.0px;top:1122.5px;font-size:13.33px;line-height:12.308px;color:#222;transform:scaleY(1.3);transform-origin:0 0;-webkit-text-stroke:0.3px #222;">Inventory</div>
<div class="a" style="left:2504.0px;top:1148.1px;width:18.0px;height:18.0px;background:#000"></div>
<div class="m" style="left:2529.0px;top:1149.1px;font-size:13.33px;line-height:12.308px;color:#222;transform:scaleY(1.3);transform-origin:0 0;-webkit-text-stroke:0.3px #222;">Inventory is locked</div>
<div class="a" style="left:2504.0px;top:1174.7px;width:18.0px;height:18.0px;background:#d2f2a2"></div>
<div class="m" style="left:2529.0px;top:1175.7px;font-size:13.33px;line-height:12.308px;color:#222;transform:scaleY(1.3);transform-origin:0 0;-webkit-text-stroke:0.3px #222;">Outbound locking</div>
<div class="a" style="left:2504.0px;top:1201.2px;width:18.0px;height:18.0px;background:#f26262"></div>
<div class="m" style="left:2529.0px;top:1202.2px;font-size:13.33px;line-height:12.308px;color:#222;transform:scaleY(1.3);transform-origin:0 0;-webkit-text-stroke:0.3px #222;">Task occupancy</div>
</div></div>
</body></html>
